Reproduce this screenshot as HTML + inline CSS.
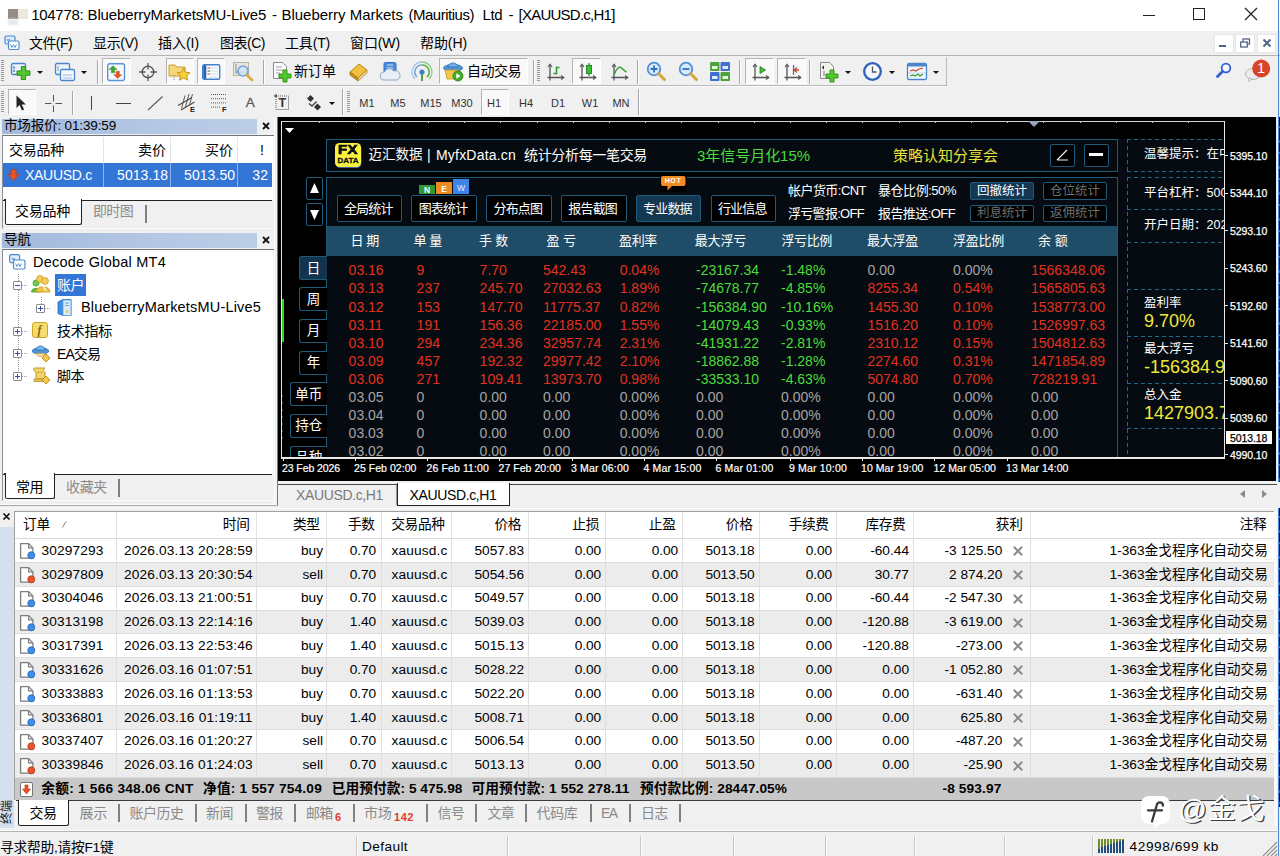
<!DOCTYPE html><html lang="zh"><head><meta charset="utf-8"><title>MT4</title><style>
*{box-sizing:border-box;margin:0;padding:0}
html,body{width:1280px;height:856px;overflow:hidden;background:#f0f0f0}
body{position:relative;font-family:"Liberation Sans","Noto Sans CJK SC",sans-serif;font-size:14px;color:#000;line-height:1}
.a{position:absolute}
.t{position:absolute;white-space:nowrap;line-height:1}
svg{position:absolute;overflow:visible}
.dk{color:#6d6d6d}
</style></head><body>
<div class="a" style="left:0px;top:0px;width:1280px;height:31px;background:#fff"></div>
<div class="a" style="left:8px;top:9px;width:10px;height:10px;background:#968c8a;filter:blur(0.500px)"></div>
<div class="a" style="left:18px;top:9px;width:9.5px;height:10px;background:#ece8de;filter:blur(0.500px)"></div>
<div class="a" style="left:8px;top:19px;width:10px;height:6px;background:#e8e8f2;filter:blur(0.800px)"></div>
<div class="t" style="left:31.3px;top:7.03px;font-size:15px;letter-spacing:-0.319px;">104778:</div>
<div class="t" style="left:87.5px;top:7.03px;font-size:15px;letter-spacing:-0.122px;">BlueberryMarketsMU-Live5</div>
<div class="t" style="left:272px;top:7.03px;font-size:15px;">-</div>
<div class="t" style="left:281.4px;top:7.03px;font-size:15px;letter-spacing:-0.007px;">Blueberry Markets</div>
<div class="t" style="left:408.5px;top:7.03px;font-size:15px;letter-spacing:-0.486px;">(Mauritius)</div>
<div class="t" style="left:482.5px;top:7.03px;font-size:15px;letter-spacing:-0.386px;">Ltd</div>
<div class="t" style="left:508.5px;top:7.03px;font-size:15px;">-</div>
<div class="t" style="left:518.5px;top:7.03px;font-size:15px;letter-spacing:-0.751px;">[XAUUSD.c,H1]</div>
<div class="a" style="left:1143px;top:15px;width:12px;height:1px;background:#222"></div>
<div class="a" style="left:1193px;top:8px;width:12px;height:12px;border:1px solid #222"></div>
<svg style="left:1245px;top:8px" width="12" height="12" viewBox="0 0 12 12"><path d="M0 0L12 12M12 0L0 12" stroke="#222" stroke-width="1.2" fill="none"/></svg>
<div class="a" style="left:0px;top:31px;width:1280px;height:24px;background:#f0f0f0"></div>
<svg style="left:4px;top:35px" width="16" height="16" viewBox="0 0 16 16"><rect x="1" y="1" width="10" height="8" rx="1.5" fill="#dfeaf8" stroke="#4c8ad0" stroke-width="1.2"/><rect x="4.5" y="6" width="10.5" height="8.5" rx="1.5" fill="#fff" stroke="#4c8ad0" stroke-width="1.2"/><path d="M6.5 9.5l1.5 3 1.5-3 1.5 3 1.5-3" stroke="#4c8ad0" stroke-width="0.9" fill="none"/><path d="M3 4l1 2 1-2 1 2" stroke="#4c8ad0" stroke-width="0.8" fill="none"/></svg>
<div class="t" style="left:29px;top:36.21px;font-size:14px;letter-spacing:-0.578px;">文件(F)</div>
<div class="t" style="left:93px;top:36.21px;font-size:14px;letter-spacing:-0.334px;">显示(V)</div>
<div class="t" style="left:158px;top:36.21px;font-size:14px;letter-spacing:-0.044px;">插入(I)</div>
<div class="t" style="left:220px;top:36.21px;font-size:14px;letter-spacing:-0.487px;">图表(C)</div>
<div class="t" style="left:285px;top:36.21px;font-size:14px;letter-spacing:-0.178px;">工具(T)</div>
<div class="t" style="left:350px;top:36.21px;font-size:14px;letter-spacing:-0.109px;">窗口(W)</div>
<div class="t" style="left:420px;top:36.21px;font-size:14px;letter-spacing:-0.087px;">帮助(H)</div>
<div class="a" style="left:1214px;top:33.5px;width:19.5px;height:19px;background:#fff;border:1px solid #e6e6e6"></div>
<div class="a" style="left:1235px;top:33.5px;width:19.5px;height:19px;background:#fff;border:1px solid #e6e6e6"></div>
<div class="a" style="left:1256.5px;top:33.5px;width:19.5px;height:19px;background:#fff;border:1px solid #e6e6e6"></div>
<div class="a" style="left:1219px;top:45px;width:7px;height:2px;background:#4f6488"></div>
<svg style="left:1240px;top:38px" width="10" height="10" viewBox="0 0 10 10"><rect x="3" y="1" width="6.500" height="5" fill="none" stroke="#4f6488" stroke-width="1.300"/><rect x="0.700" y="4" width="6.500" height="5" fill="#fff" stroke="#4f6488" stroke-width="1.300"/></svg>
<svg style="left:1262.5px;top:39px" width="8" height="8" viewBox="0 0 8 8"><path d="M0.500 0.500L7.500 7.500M7.500 0.500L0.500 7.500" stroke="#4f6488" stroke-width="1.900" fill="none"/></svg>
<div class="a" style="left:0px;top:55px;width:1280px;height:1px;background:#b4b4b4"></div>
<div class="a" style="left:0px;top:56px;width:1280px;height:60px;background:#f0f0f0"></div>
<div class="a" style="left:0px;top:85px;width:946px;height:1px;background:#b9b9b9"></div>
<div class="a" style="left:946px;top:57px;width:1px;height:29px;background:#b9b9b9"></div>
<div class="a" style="left:0px;top:86px;width:946px;height:1px;background:#fdfdfd"></div>
<div class="a" style="left:1px;top:60px;width:3px;height:22px;background:repeating-linear-gradient(to bottom,#9a9a9a 0,#9a9a9a 1px,#f0f0f0 1px,#f0f0f0 2px)"></div>
<svg style="left:10.5px;top:63px" width="22" height="20" viewBox="0 0 22 20"><rect x="0.5" y="0.5" width="14" height="11" rx="1.5" fill="#eaf2fb" stroke="#4a86cc" stroke-width="1.3"/><path d="M3 3.500v5.500M2 5l1-1.500 1 1.500M2 7.500l1 1.500 1-1.500" stroke="#4a86cc" stroke-width="0.8" fill="none"/><g transform="translate(6,3.6) scale(1.08)"><path d="M0 4h4v-4h4v4h4v4h-4v4h-4v-4h-4z" fill="#52c82e" stroke="#2b8a15" stroke-width="0.9"/></g></svg>
<svg style="left:37px;top:70.5px" width="6" height="3" viewBox="0 0 6 3"><path d="M0 0h6L3 3z" fill="#111"/></svg>
<svg style="left:55px;top:63px" width="22" height="20" viewBox="0 0 22 20"><rect x="0.5" y="0.5" width="14" height="11" rx="1.5" fill="#eaf2fb" stroke="#4a86cc" stroke-width="1.3"/><rect x="5.5" y="6.5" width="14" height="11" rx="1.5" fill="#f4f8fd" stroke="#4a86cc" stroke-width="1.3"/><path d="M8 12h9M8 15h9" stroke="#8db3df" stroke-width="0.9"/><path d="M3 3v5" stroke="#4a86cc" stroke-width="0.8"/></svg>
<svg style="left:81px;top:70.5px" width="6" height="3" viewBox="0 0 6 3"><path d="M0 0h6L3 3z" fill="#111"/></svg>
<div class="a" style="left:97px;top:60px;width:1px;height:24px;background:#a5a5a5"></div>
<div class="a" style="left:98px;top:60px;width:1px;height:24px;background:#fff"></div>
<div class="a" style="left:102px;top:58px;width:28.5px;height:26px;background:#f9f9f9;border:1px solid #fff;border-top-color:#b4b4b4;border-left-color:#b4b4b4"></div>
<svg style="left:106.8px;top:62.8px" width="19" height="19" viewBox="0 0 19 19"><rect x="0.700" y="0.700" width="16.800" height="16.800" rx="2" fill="#f7fafd" stroke="#5b93d6" stroke-width="1.400"/><path d="M6 2.700l4.100 3.800h-2.400v3.300h-3.400v-3.300h-2.400z" fill="#3aa832" stroke="#2a8a24" stroke-width="0.400"/><path d="M10.700 15.500l-4.100-3.800h2.400v-3.500h3.400v3.500h2.400z" fill="#e25a30" stroke="#b8421c" stroke-width="0.400"/></svg>
<svg style="left:139px;top:63px" width="18" height="18" viewBox="0 0 18 18"><circle cx="9" cy="9" r="5.800" fill="none" stroke="#5a5a5a" stroke-width="1.400"/><path d="M9 0v6.500M9 11.500v6.500M0 9h6.500M11.500 9h6.500" stroke="#5a5a5a" stroke-width="1.300"/></svg>
<div class="a" style="left:166px;top:58px;width:28px;height:26px;background:#f9f9f9;border:1px solid #fff;border-top-color:#b4b4b4;border-left-color:#b4b4b4"></div>
<svg style="left:168px;top:62px" width="24" height="20" viewBox="0 0 24 20"><path d="M1 3h6l2 2h8v9h-16z" fill="#f3d67a" stroke="#c9a032" stroke-width="1"/><path d="M15.5 6l2 4.2 4.5.5-3.3 3 .9 4.5-4.1-2.3-4.1 2.300.9-4.500-3.300-3 4.500-.5z" fill="#f6cf3a" stroke="#c79a1a" stroke-width="1"/><path d="M6 13v6" stroke="#777" stroke-width="0.9" stroke-dasharray="1 1"/></svg>
<div class="a" style="left:197px;top:58px;width:28px;height:26px;background:#f9f9f9;border:1px solid #fff;border-top-color:#b4b4b4;border-left-color:#b4b4b4"></div>
<svg style="left:201.5px;top:63.5px" width="19" height="16" viewBox="0 0 19 16"><rect x="0.700" y="0.700" width="17" height="14.600" rx="1.500" fill="#fdfeff" stroke="#3f7fcb" stroke-width="1.400"/><rect x="1.300" y="1.300" width="3" height="13.400" fill="#2f5fa8"/><path d="M7 4h9M7 7h9M7 10h9M7 13h9" stroke="#c4d6ee" stroke-width="0.900"/><path d="M5.500 4h2.500M5.500 10h2.500" stroke="#e0522a" stroke-width="1.100"/><path d="M5.500 7h2.500" stroke="#3a8a3a" stroke-width="1.100"/></svg>
<svg style="left:233px;top:62px" width="22" height="20" viewBox="0 0 22 20"><rect x="0.5" y="0.5" width="15" height="13" fill="#e9e6dc" stroke="#b9b39d" stroke-width="1"/><path d="M3 2v10M3 10h10" stroke="#777" stroke-width="0.8"/><circle cx="10" cy="9" r="5" fill="#cfe4f8" fill-opacity="0.85" stroke="#6fa3db" stroke-width="1.6"/><path d="M14 13l5 5" stroke="#d9a93a" stroke-width="2.6" stroke-linecap="round"/></svg>
<div class="a" style="left:263px;top:60px;width:1px;height:24px;background:#a5a5a5"></div>
<div class="a" style="left:264px;top:60px;width:1px;height:24px;background:#fff"></div>
<svg style="left:273px;top:62px" width="20" height="20" viewBox="0 0 20 20"><path d="M0.500 0.500h9l4 4v12h-13z" fill="#fafafa" stroke="#8b8b8b" stroke-width="1"/><path d="M3 5h6M3 8h7M3 11h4" stroke="#9a9a9a" stroke-width="0.9"/><g transform="translate(6,8) scale(1.0)"><path d="M0 4h4v-4h4v4h4v4h-4v4h-4v-4h-4z" fill="#52c82e" stroke="#2b8a15" stroke-width="0.9"/></g></svg>
<div class="t" style="left:294px;top:64.21px;font-size:14px;letter-spacing:0.000px;">新订单</div>
<svg style="left:349px;top:62px" width="20" height="18" viewBox="0 0 20 18"><path d="M1 10l9-8 8 6-9 8z" fill="#f0c040" stroke="#b98416" stroke-width="1"/><path d="M1 10l0 3 8 6 0-3z" fill="#c98f1c" stroke="#a87412" stroke-width="0.8"/><path d="M9 16l9-8v3l-9 8z" fill="#e8d9a8" stroke="#b98416" stroke-width="0.8"/></svg>
<svg style="left:380px;top:62px" width="22" height="20" viewBox="0 0 22 20"><rect x="4" y="0.500" width="12" height="12" rx="1.5" fill="#4a8fdc" stroke="#2f6fbd" stroke-width="1"/><path d="M7 3h6M7 6h6" stroke="#cfe2f7" stroke-width="1.2"/><path d="M4 18a4 4 0 0 1 .5-8 5 5 0 0 1 9-1 4.500 4.500 0 0 1 3.500 9z" fill="#e8eef6" stroke="#8ea6c4" stroke-width="1"/></svg>
<svg style="left:412px;top:62px" width="20" height="20" viewBox="0 0 20 20"><path d="M10 3a7 7 0 0 0 -5 12" fill="none" stroke="#7aa6dc" stroke-width="1.6"/><path d="M10 3a7 7 0 0 1 5 12" fill="none" stroke="#5bb04a" stroke-width="1.6"/><path d="M10 0a10 10 0 0 0 -7 17" fill="none" stroke="#a9c6e8" stroke-width="1.3"/><path d="M10 0a10 10 0 0 1 7 17" fill="none" stroke="#8fce80" stroke-width="1.3"/><circle cx="10" cy="10" r="2.6" fill="#3f7fcb"/><path d="M10 12v7" stroke="#4aa63a" stroke-width="2"/></svg>
<div class="a" style="left:439px;top:58px;width:89px;height:26px;background:#f9f9f9;border:1px solid #fff;border-top-color:#b4b4b4;border-left-color:#b4b4b4"></div>
<svg style="left:443px;top:62px" width="22" height="20" viewBox="0 0 22 20"><ellipse cx="10" cy="6" rx="9.500" ry="3.600" fill="#4f95d8" stroke="#2f6fb5" stroke-width="0.8"/><path d="M5 5a5 4 0 0 1 10 0z" fill="#6fb0ea" stroke="#2f6fb5" stroke-width="0.8"/><path d="M2 8l2 9h9l3-9z" fill="#f2c84a" stroke="#c3951e" stroke-width="0.8"/><circle cx="15" cy="14" r="5" fill="#3fae2a" stroke="#237a14" stroke-width="0.8"/><path d="M13.300 11.200l4.200 2.800-4.200 2.800z" fill="#fff"/></svg>
<div class="t" style="left:467px;top:64.21px;font-size:14px;letter-spacing:-0.500px;">自动交易</div>
<div class="a" style="left:533px;top:60px;width:1px;height:24px;background:#a5a5a5"></div>
<div class="a" style="left:534px;top:60px;width:1px;height:24px;background:#fff"></div>
<div class="a" style="left:537px;top:60px;width:3px;height:22px;background:repeating-linear-gradient(to bottom,#9a9a9a 0,#9a9a9a 1px,#f0f0f0 1px,#f0f0f0 2px)"></div>
<svg style="left:546.5px;top:62.5px" width="19" height="20" viewBox="0 0 19 20"><path d="M3 1.500v16M0.500 14.500h16" stroke="#555" stroke-width="1.300" fill="none"/><path d="M1 4l2-2.800 2 2.800M14 12.500l2.800 2-2.800 2" stroke="#555" stroke-width="1.100" fill="none"/><path d="M9.500 3.500v8M9.500 4.500h3M6.500 10.500h3" stroke="#2f9e2a" stroke-width="1.600" fill="none"/></svg>
<div class="a" style="left:572px;top:58px;width:29px;height:26px;background:#f9f9f9;border:1px solid #fff;border-top-color:#b4b4b4;border-left-color:#b4b4b4"></div>
<svg style="left:578.5px;top:62.5px" width="19" height="20" viewBox="0 0 19 20"><path d="M3 1.500v16M0.500 14.500h16" stroke="#555" stroke-width="1.300" fill="none"/><path d="M1 4l2-2.800 2 2.800M14 12.500l2.800 2-2.800 2" stroke="#555" stroke-width="1.100" fill="none"/><path d="M10 0v13" stroke="#1f7f1c" stroke-width="1.2"/><rect x="7.500" y="2.500" width="5" height="8" fill="#3fbf35" stroke="#1f7f1c" stroke-width="0.9"/></svg>
<svg style="left:610.5px;top:62.5px" width="19" height="20" viewBox="0 0 19 20"><path d="M3 1.500v16M0.500 14.500h16" stroke="#555" stroke-width="1.300" fill="none"/><path d="M1 4l2-2.800 2 2.800M14 12.500l2.800 2-2.800 2" stroke="#555" stroke-width="1.100" fill="none"/><path d="M3.500 11c2-6 5-8 7-6s3 3 5 4" stroke="#2f9e2a" stroke-width="1.400" fill="none"/></svg>
<div class="a" style="left:637px;top:60px;width:1px;height:24px;background:#a5a5a5"></div>
<div class="a" style="left:638px;top:60px;width:1px;height:24px;background:#fff"></div>
<svg style="left:646px;top:61px" width="22" height="22" viewBox="0 0 22 22"><circle cx="8" cy="8" r="6.300" fill="#d9ebfb" stroke="#4f8fd6" stroke-width="1.800"/><path d="M12.500 12.500l6 6" stroke="#d4a838" stroke-width="3" stroke-linecap="round"/><path d="M4.500 8h7M8 4.500v7" stroke="#2f6fbd" stroke-width="1.800"/></svg>
<svg style="left:678px;top:61px" width="22" height="22" viewBox="0 0 22 22"><circle cx="8" cy="8" r="6.300" fill="#d9ebfb" stroke="#4f8fd6" stroke-width="1.800"/><path d="M12.500 12.500l6 6" stroke="#d4a838" stroke-width="3" stroke-linecap="round"/><path d="M4.500 8h7" stroke="#2f6fbd" stroke-width="1.800"/></svg>
<svg style="left:710px;top:62px" width="20" height="19" viewBox="0 0 20 19"><rect x="0" y="0" width="9.500" height="9" rx="1" fill="#4fa23a"/><rect x="10.500" y="0" width="9.500" height="9" rx="1" fill="#3f6fd0"/><rect x="0" y="10" width="9.500" height="9" rx="1" fill="#3f6fd0"/><rect x="10.500" y="10" width="9.500" height="9" rx="1" fill="#4fa23a"/><path d="M2 4h5.500v3h-5.500zM12.500 4h5.500v3h-5.500zM2 14h5.500v3h-5.500zM12.500 14h5.500v3h-5.500z" fill="#fff" fill-opacity="0.850"/></svg>
<div class="a" style="left:739px;top:60px;width:1px;height:24px;background:#a5a5a5"></div>
<div class="a" style="left:740px;top:60px;width:1px;height:24px;background:#fff"></div>
<div class="a" style="left:745px;top:58px;width:29px;height:26px;background:#f9f9f9;border:1px solid #fff;border-top-color:#b4b4b4;border-left-color:#b4b4b4"></div>
<svg style="left:751.5px;top:62.5px" width="19" height="20" viewBox="0 0 19 20"><path d="M3 1.500v16M0.500 14.500h16" stroke="#555" stroke-width="1.300" fill="none"/><path d="M1 4l2-2.800 2 2.800M14 12.500l2.800 2-2.800 2" stroke="#555" stroke-width="1.100" fill="none"/><path d="M8 3.500l5.500 3.500-5.500 3.500z" fill="#3fbf35" stroke="#1f7f1c" stroke-width="0.800"/></svg>
<div class="a" style="left:777px;top:58px;width:29px;height:26px;background:#f9f9f9;border:1px solid #fff;border-top-color:#b4b4b4;border-left-color:#b4b4b4"></div>
<svg style="left:783.5px;top:62.5px" width="19" height="20" viewBox="0 0 19 20"><path d="M3 1.500v16M0.500 14.500h16" stroke="#555" stroke-width="1.300" fill="none"/><path d="M1 4l2-2.800 2 2.800M14 12.500l2.800 2-2.800 2" stroke="#555" stroke-width="1.100" fill="none"/><path d="M9.500 2v10" stroke="#3f6fd0" stroke-width="1.300"/><path d="M15 7h-4M13 4.500l-3 2.500 3 2.500" stroke="#d0452a" stroke-width="1.300" fill="none"/></svg>
<div class="a" style="left:809px;top:60px;width:1px;height:24px;background:#a5a5a5"></div>
<div class="a" style="left:810px;top:60px;width:1px;height:24px;background:#fff"></div>
<svg style="left:820px;top:62px" width="20" height="20" viewBox="0 0 20 20"><path d="M0.500 0.500h9l4 4v12h-13z" fill="#f3f3ee" stroke="#8b8b8b" stroke-width="1"/><path d="M4 4c-2 0-2 3 0 3M4 9v5" stroke="#777" stroke-width="1"/><g transform="translate(6,8) scale(1.0)"><path d="M0 4h4v-4h4v4h4v4h-4v4h-4v-4h-4z" fill="#52c82e" stroke="#2b8a15" stroke-width="0.9"/></g></svg>
<svg style="left:845px;top:70.5px" width="6" height="3" viewBox="0 0 6 3"><path d="M0 0h6L3 3z" fill="#111"/></svg>
<svg style="left:863px;top:62px" width="19" height="19" viewBox="0 0 19 19"><circle cx="9.500" cy="9.500" r="8.300" fill="#f4f8fd" stroke="#2f63b8" stroke-width="2.300"/><path d="M9.500 4.500v5.500h4" stroke="#555" stroke-width="1.300" fill="none"/></svg>
<svg style="left:889px;top:70.5px" width="6" height="3" viewBox="0 0 6 3"><path d="M0 0h6L3 3z" fill="#111"/></svg>
<svg style="left:907px;top:63px" width="20" height="17" viewBox="0 0 20 17"><rect x="0.500" y="0.500" width="19" height="16" rx="1.500" fill="#f4f8fd" stroke="#4a86cc" stroke-width="1.300"/><rect x="1" y="1" width="18" height="2.500" fill="#4a86cc"/><path d="M3 8l3-1 3 1 3-2 4-1" stroke="#d0452a" stroke-width="1.200" fill="none"/><path d="M3 13l3-1 2 1 3-2 2 2 3-2" stroke="#2f9e2a" stroke-width="1.200" fill="none"/><path d="M1 10h18" stroke="#b6cdea" stroke-width="0.800"/></svg>
<svg style="left:933px;top:70.5px" width="6" height="3" viewBox="0 0 6 3"><path d="M0 0h6L3 3z" fill="#111"/></svg>
<svg style="left:1215px;top:62px" width="16" height="17" viewBox="0 0 16 17"><circle cx="11" cy="6" r="4.300" fill="#f4f8fe" stroke="#2f5fd0" stroke-width="1.800"/><path d="M7.500 9.500l-5 5" stroke="#2f5fd0" stroke-width="2.800" stroke-linecap="round"/></svg>
<svg style="left:1244px;top:59px" width="28" height="24" viewBox="0 0 28 24"><ellipse cx="9" cy="15" rx="7.500" ry="5.500" fill="#ececec" stroke="#b5b5b5" stroke-width="1"/><path d="M5 19l-1 3.500 4.500-2.500z" fill="#ececec" stroke="#b5b5b5" stroke-width="0.800"/><circle cx="17.200" cy="9.500" r="9" fill="#d8432a"/></svg>
<div class="t" style="left:1161px;width:200px;text-align:center;top:61.47px;font-size:14.5px;color:#fff">1</div>
<div class="a" style="left:1px;top:91px;width:3px;height:22px;background:repeating-linear-gradient(to bottom,#9a9a9a 0,#9a9a9a 1px,#f0f0f0 1px,#f0f0f0 2px)"></div>
<div class="a" style="left:8px;top:89px;width:28px;height:26px;background:#f9f9f9;border:1px solid #fff;border-top-color:#b4b4b4;border-left-color:#b4b4b4"></div>
<svg style="left:16px;top:95px" width="12" height="18" viewBox="0 0 12 18"><path d="M0.500 0.500v12.500l3.100-2.900 2.400 5.400 2.100-.9-2.400-5.200h4.200z" fill="#222"/></svg>
<svg style="left:45px;top:95px" width="17" height="17" viewBox="0 0 17 17"><path d="M8.500 0v6.500M8.500 10.500v6.500M0 8.500h6.500M10.500 8.500h6.500" stroke="#555" stroke-width="1"/></svg>
<div class="a" style="left:72px;top:91px;width:1px;height:24px;background:#a5a5a5"></div>
<div class="a" style="left:73px;top:91px;width:1px;height:24px;background:#fff"></div>
<div class="a" style="left:91px;top:96px;width:1px;height:14px;background:#444"></div>
<div class="a" style="left:116px;top:103px;width:15px;height:1px;background:#444"></div>
<svg style="left:148px;top:95.5px" width="16" height="15" viewBox="0 0 16 15"><path d="M0 14l14.500-13.500" stroke="#5a5a5a" stroke-width="1.100"/></svg>
<svg style="left:178px;top:93.5px" width="18" height="18" viewBox="0 0 18 18"><path d="M0 11.500l14-8M3 16l13.500-8" stroke="#4a4a4a" stroke-width="1.200"/><path d="M3.500 14.500l3.500-13M7.500 13l3.500-13M11.500 11l3-11" stroke="#4a4a4a" stroke-width="0.900"/></svg>
<div class="t" style="left:190px;top:105.66px;font-size:7.5px;font-weight:bold;color:#222">E</div>
<svg style="left:210.5px;top:94px" width="17" height="14" viewBox="0 0 17 14"><path d="M0 0.500h15.500M0 4.700h15.500M0 8.900h15.500M0 13.100h9" stroke="#555" stroke-width="1" stroke-dasharray="1 1"/></svg>
<div class="t" style="left:222px;top:106.36px;font-size:7.5px;font-weight:bold;color:#222">F</div>
<div class="t" style="left:150.3px;width:200px;text-align:center;top:96.25px;font-size:13.5px;color:#5a5a5a;-webkit-text-stroke:0.300px #5a5a5a">A</div>
<svg style="left:274px;top:93.5px" width="17" height="18" viewBox="0 0 17 18"><rect x="2" y="2" width="12.500" height="13.500" fill="none" stroke="#555" stroke-width="1" stroke-dasharray="1 1"/><path d="M0.500 0.500h2.500v2.500h-2.500z" fill="#555"/></svg>
<div class="t" style="left:182.3px;width:200px;text-align:center;top:97.44px;font-size:12.5px;font-weight:bold;color:#333">T</div>
<svg style="left:306px;top:95px" width="16" height="16" viewBox="0 0 16 16"><path d="M4.500 0l3.500 3.500-3.500 3.500-3.500-3.500z" fill="#333"/><path d="M11.500 8.500l3.500 3.500-3.500 3.500-3.500-3.500z" fill="#333"/><path d="M3 8.500l3 2.500 4.500-4.500" stroke="#444" stroke-width="1.400" fill="none"/></svg>
<svg style="left:329px;top:101.5px" width="6" height="3" viewBox="0 0 6 3"><path d="M0 0h6L3 3z" fill="#111"/></svg>
<div class="a" style="left:342px;top:89px;width:1px;height:26px;background:#a5a5a5"></div>
<div class="a" style="left:343px;top:89px;width:1px;height:26px;background:#fff"></div>
<div class="a" style="left:347px;top:91px;width:3px;height:22px;background:repeating-linear-gradient(to bottom,#9a9a9a 0,#9a9a9a 1px,#f0f0f0 1px,#f0f0f0 2px)"></div>
<div class="a" style="left:481px;top:89px;width:28px;height:26px;background:#f9f9f9;border:1px solid #fff;border-top-color:#b4b4b4;border-left-color:#b4b4b4"></div>
<div class="t" style="left:267px;width:200px;text-align:center;top:97.67px;font-size:11px;color:#333">M1</div>
<div class="t" style="left:298px;width:200px;text-align:center;top:97.67px;font-size:11px;color:#333">M5</div>
<div class="t" style="left:331px;width:200px;text-align:center;top:97.67px;font-size:11px;color:#333">M15</div>
<div class="t" style="left:362px;width:200px;text-align:center;top:97.67px;font-size:11px;color:#333">M30</div>
<div class="t" style="left:394px;width:200px;text-align:center;top:97.67px;font-size:11px;color:#333">H1</div>
<div class="t" style="left:426px;width:200px;text-align:center;top:97.67px;font-size:11px;color:#333">H4</div>
<div class="t" style="left:458px;width:200px;text-align:center;top:97.67px;font-size:11px;color:#333">D1</div>
<div class="t" style="left:490px;width:200px;text-align:center;top:97.67px;font-size:11px;color:#333">W1</div>
<div class="t" style="left:521px;width:200px;text-align:center;top:97.67px;font-size:11px;color:#333">MN</div>
<div class="a" style="left:638px;top:89px;width:1px;height:26px;background:#a5a5a5"></div>
<div class="a" style="left:639px;top:89px;width:1px;height:26px;background:#fff"></div>
<div class="a" style="left:0px;top:116px;width:279px;height:392px;background:#f0f0f0"></div>
<div class="a" style="left:2px;top:119px;width:255px;height:15px;background:linear-gradient(to right,#a3b9dc 0,#b4c7e4 60%,#bccde7 100%)"></div>
<div class="t" style="left:4px;top:119.45px;font-size:13.5px;letter-spacing:-0.147px;">市场报价: 01:39:59</div>
<svg style="left:262px;top:122px" width="8" height="8" viewBox="0 0 8 8"><path d="M1 1l6 6M7 1l-6 6" stroke="#111" stroke-width="1.800"/></svg>
<div class="a" style="left:2px;top:135px;width:273px;height:94px;background:#f0f0f0;border:1px solid #8a8f98;border-top-color:#6f747c;border-right-color:#fbfbfb;border-bottom-color:#fbfbfb"></div>
<div class="a" style="left:3px;top:136px;width:270px;height:64px;background:#fff"></div>
<div class="a" style="left:103px;top:137px;width:1px;height:26px;background:#e4e4e4"></div>
<div class="a" style="left:170px;top:137px;width:1px;height:26px;background:#e4e4e4"></div>
<div class="a" style="left:237px;top:137px;width:1px;height:26px;background:#e4e4e4"></div>
<div class="t" style="left:9px;top:142.71px;font-size:14px;letter-spacing:-0.250px;">交易品种</div>
<div class="t" style="right:1114.0px;top:142.71px;text-align:right;font-size:14px;letter-spacing:0.000px;">卖价</div>
<div class="t" style="right:1047.0px;top:142.71px;text-align:right;font-size:14px;letter-spacing:0.000px;">买价</div>
<div class="t" style="left:260px;top:142.71px;font-size:14px;">!</div>
<div class="a" style="left:3px;top:163px;width:269px;height:24px;background:#3376d6"></div>
<div class="a" style="left:103px;top:163px;width:1px;height:24px;background:#8fb3ea"></div>
<div class="a" style="left:170px;top:163px;width:1px;height:24px;background:#8fb3ea"></div>
<div class="a" style="left:237px;top:163px;width:1px;height:24px;background:#8fb3ea"></div>
<svg style="left:8px;top:169px" width="11" height="12" viewBox="0 0 11 12"><path d="M3 0.500h5v5h3l-5.500 6-5.500-6h3z" fill="#e8542a" stroke="#b53a15" stroke-width="0.800"/></svg>
<div class="t" style="left:25px;top:168.21px;font-size:14px;letter-spacing:-0.279px;color:#fff">XAUUSD.c</div>
<div class="t" style="right:1111.94px;top:168.21px;text-align:right;font-size:14px;letter-spacing:0.056px;color:#fff">5013.18</div>
<div class="t" style="right:1044.94px;top:168.21px;text-align:right;font-size:14px;letter-spacing:0.056px;color:#fff">5013.50</div>
<div class="t" style="right:1011.79px;top:168.21px;text-align:right;font-size:14px;letter-spacing:0.211px;color:#fff">32</div>
<div class="a" style="left:3px;top:199.5px;width:269px;height:1.5px;background:#222"></div>
<div class="a" style="left:4.5px;top:199px;width:77.5px;height:26px;background:#fff;border:1.500px solid #222;border-top:none;border-radius:0 0 2.500px 2.500px"></div>
<div class="a" style="left:6px;top:198px;width:74.5px;height:3px;background:#fff"></div>
<div class="a" style="left:3.5px;top:198.5px;width:1.5px;height:2px;background:#222"></div>
<div class="t" style="left:15px;top:204.21px;font-size:14px;letter-spacing:-0.250px;">交易品种</div>
<div class="t" style="left:93px;top:204.21px;font-size:14px;letter-spacing:-0.667px;color:#8b8b8b">即时图</div>
<div class="a" style="left:145px;top:205px;width:1.5px;height:17.5px;background:#808080"></div>
<div class="a" style="left:2px;top:233px;width:255px;height:15px;background:linear-gradient(to right,#a3b9dc 0,#b4c7e4 60%,#bccde7 100%)"></div>
<div class="t" style="left:4px;top:233.45px;font-size:13.5px;letter-spacing:0.000px;">导航</div>
<svg style="left:262px;top:236px" width="8" height="8" viewBox="0 0 8 8"><path d="M1 1l6 6M7 1l-6 6" stroke="#111" stroke-width="1.800"/></svg>
<div class="a" style="left:2px;top:249px;width:273px;height:252px;background:#f0f0f0;border:1px solid #8a8f98;border-top-color:#6f747c;border-right-color:#fbfbfb;border-bottom-color:#fbfbfb"></div>
<div class="a" style="left:3px;top:250px;width:270px;height:224px;background:#fff"></div>
<div class="a" style="left:18px;top:274px;width:1px;height:104px;background:repeating-linear-gradient(to bottom,#9a9a9a 0,#9a9a9a 1px,transparent 1px,transparent 2px)"></div>
<div class="a" style="left:41px;top:297px;width:1px;height:8px;background:repeating-linear-gradient(to bottom,#9a9a9a 0,#9a9a9a 1px,transparent 1px,transparent 2px)"></div>
<div class="a" style="left:22px;top:285px;width:6px;height:1px;background:repeating-linear-gradient(to right,#9a9a9a 0,#9a9a9a 1px,transparent 1px,transparent 2px)"></div>
<div class="a" style="left:13px;top:281px;width:9px;height:9px;background:#fff;border:1px solid #8c8c8c;border-radius:1px"></div>
<div class="a" style="left:15px;top:285px;width:5px;height:1px;background:#2f4fa0"></div>
<div class="a" style="left:45px;top:308px;width:6px;height:1px;background:repeating-linear-gradient(to right,#9a9a9a 0,#9a9a9a 1px,transparent 1px,transparent 2px)"></div>
<div class="a" style="left:36px;top:304px;width:9px;height:9px;background:#fff;border:1px solid #8c8c8c;border-radius:1px"></div>
<div class="a" style="left:38px;top:308px;width:5px;height:1px;background:#2f4fa0"></div>
<div class="a" style="left:40px;top:306px;width:1px;height:5px;background:#2f4fa0"></div>
<div class="a" style="left:22px;top:331px;width:6px;height:1px;background:repeating-linear-gradient(to right,#9a9a9a 0,#9a9a9a 1px,transparent 1px,transparent 2px)"></div>
<div class="a" style="left:13px;top:327px;width:9px;height:9px;background:#fff;border:1px solid #8c8c8c;border-radius:1px"></div>
<div class="a" style="left:15px;top:331px;width:5px;height:1px;background:#2f4fa0"></div>
<div class="a" style="left:17px;top:329px;width:1px;height:5px;background:#2f4fa0"></div>
<div class="a" style="left:22px;top:353px;width:6px;height:1px;background:repeating-linear-gradient(to right,#9a9a9a 0,#9a9a9a 1px,transparent 1px,transparent 2px)"></div>
<div class="a" style="left:13px;top:349px;width:9px;height:9px;background:#fff;border:1px solid #8c8c8c;border-radius:1px"></div>
<div class="a" style="left:15px;top:353px;width:5px;height:1px;background:#2f4fa0"></div>
<div class="a" style="left:17px;top:351px;width:1px;height:5px;background:#2f4fa0"></div>
<div class="a" style="left:22px;top:376px;width:6px;height:1px;background:repeating-linear-gradient(to right,#9a9a9a 0,#9a9a9a 1px,transparent 1px,transparent 2px)"></div>
<div class="a" style="left:13px;top:372px;width:9px;height:9px;background:#fff;border:1px solid #8c8c8c;border-radius:1px"></div>
<div class="a" style="left:15px;top:376px;width:5px;height:1px;background:#2f4fa0"></div>
<div class="a" style="left:17px;top:374px;width:1px;height:5px;background:#2f4fa0"></div>
<svg style="left:9px;top:254px" width="17" height="16" viewBox="0 0 17 16"><rect x="0.600" y="0.600" width="10" height="8" rx="1.500" fill="#dfeaf8" stroke="#4c8ad0" stroke-width="1.200"/><rect x="4.500" y="6" width="11.500" height="9" rx="1.500" fill="#fff" stroke="#4c8ad0" stroke-width="1.200"/><path d="M6.500 9.500l1.500 3 1.500-3 1.500 3 1.500-3" stroke="#4c8ad0" stroke-width="0.900" fill="none"/><path d="M3 4l1 2 1-2 1 2" stroke="#4c8ad0" stroke-width="0.800" fill="none"/></svg>
<div class="t" style="left:33px;top:254.97px;font-size:14.5px;letter-spacing:0.238px;">Decode Global MT4</div>
<svg style="left:31px;top:275px" width="20" height="18" viewBox="0 0 20 18"><circle cx="5" cy="8" r="3" fill="#6fcf4f" stroke="#3c9a2a" stroke-width="0.800"/><path d="M0.500 17c0-5 9-5 9 0z" fill="#5fc63f" stroke="#3c9a2a" stroke-width="0.800"/><circle cx="9" cy="4" r="3.400" fill="#f2cf5a" stroke="#c79a22" stroke-width="0.800"/><circle cx="14" cy="6" r="3.400" fill="#f2cf5a" stroke="#c79a22" stroke-width="0.800"/><path d="M5 17c0-7 14-7 14 0z" fill="#eec244" stroke="#c79a22" stroke-width="0.800"/><path d="M12 11l3 5" stroke="#fff" stroke-width="1.200"/></svg>
<div class="a" style="left:55px;top:274px;width:31px;height:22px;background:#3376d6"></div>
<div class="t" style="left:57px;top:278.21px;font-size:14px;letter-spacing:-0.500px;color:#fff">账户</div>
<svg style="left:57px;top:299px" width="15" height="18" viewBox="0 0 15 18"><path d="M1 3l5-2.500h8v16h-8l-5-2z" fill="#3f8fe0" stroke="#2a6fc0" stroke-width="0.900"/><rect x="6" y="1" width="8" height="15.500" fill="#d9ecfb" stroke="#5fa0e0" stroke-width="0.800"/><path d="M8 4h4M8 6.500h4" stroke="#5fa0e0" stroke-width="0.900"/><rect x="9" y="11" width="2.200" height="3" fill="#f2c84a"/></svg>
<div class="t" style="left:81px;top:299.97px;font-size:14.5px;letter-spacing:0.180px;">BlueberryMarketsMU-Live5</div>
<svg style="left:32px;top:322px" width="16" height="16" viewBox="0 0 16 16"><rect x="0.500" y="0.500" width="15" height="15" rx="2.500" fill="#f6dc6a" stroke="#c9a62e" stroke-width="1"/></svg>
<div class="t" style="left:37.5px;top:323.68px;font-size:12px;font-family:&quot;Liberation Serif&quot;,serif;font-style:italic;font-weight:bold;color:#8a6a10">f</div>
<div class="t" style="left:57px;top:323.61px;font-size:14px;letter-spacing:-0.250px;">技术指标</div>
<svg style="left:32px;top:345px" width="19" height="17" viewBox="0 0 19 17"><ellipse cx="8.500" cy="6" rx="8.300" ry="3.300" fill="#4f95d8" stroke="#2f6fb5" stroke-width="0.800"/><path d="M4 5a4.500 4 0 0 1 9 0z" fill="#79b7ee" stroke="#2f6fb5" stroke-width="0.800"/><path d="M4 8.500c0 4 9 4 9 0z" fill="#f3d9a0" stroke="#c9a050" stroke-width="0.700"/><path d="M14 9l4 4-4 4-4-4z" fill="#f2c84a" stroke="#b98a1c" stroke-width="0.900"/></svg>
<div class="t" style="left:57px;top:346.61px;font-size:14px;letter-spacing:-0.922px;">EA交易</div>
<svg style="left:32px;top:367px" width="19" height="17" viewBox="0 0 19 17"><path d="M2 1h11c-2 2-2 3 0 4v7h-9v-7c-2-1-3-2-2-4z" fill="#f2d46a" stroke="#b9902a" stroke-width="0.900"/><path d="M2 12h11v2.500h-11z" fill="#e9c24f" stroke="#b9902a" stroke-width="0.800"/><path d="M6.500 5v1M9.500 5v1" stroke="#8a6a10" stroke-width="1"/><path d="M14 9l4 4-4 4-4-4z" fill="#f2c84a" stroke="#b98a1c" stroke-width="0.900"/></svg>
<div class="t" style="left:57px;top:368.61px;font-size:14px;letter-spacing:-0.500px;">脚本</div>
<div class="a" style="left:3px;top:473.5px;width:269px;height:1.5px;background:#222"></div>
<div class="a" style="left:4.5px;top:473px;width:50.5px;height:26px;background:#fff;border:1.500px solid #222;border-top:none;border-radius:0 0 2.500px 2.500px"></div>
<div class="a" style="left:6px;top:472px;width:47.5px;height:3px;background:#fff"></div>
<div class="a" style="left:3.5px;top:472.5px;width:1.5px;height:2px;background:#222"></div>
<div class="t" style="left:16px;top:480.21px;font-size:14px;letter-spacing:-0.500px;">常用</div>
<div class="t" style="left:66px;top:480.21px;font-size:14px;letter-spacing:-0.333px;color:#8b8b8b">收藏夹</div>
<div class="a" style="left:118px;top:479px;width:1.5px;height:18px;background:#808080"></div>
<div class="a" style="left:276px;top:116px;width:3px;height:392px;background:#f0f0f0"></div>
<div class="a" style="left:279px;top:116px;width:1001px;height:366px;background:#f0f0f0"></div>
<div class="a" style="left:278px;top:117px;width:998px;height:364px;background:#000"></div>
<div class="a" style="left:1276px;top:117px;width:1px;height:364px;background:#e6eefa"></div>
<div class="a" style="left:1277.5px;top:0px;width:1.5px;height:856px;background:#4a86dc"></div>
<div class="a" style="left:1279px;top:117px;width:1px;height:690px;background:repeating-linear-gradient(to bottom,#0a1020 0,#0a1020 9px,#6a6a30 9px,#6a6a30 11px,#101830 11px,#101830 23px,#2f5f9a 23px,#2f5f9a 26px)"></div>
<div class="a" style="left:281px;top:120.5px;width:944px;height:1px;background:#d4d4d4"></div>
<div class="a" style="left:281px;top:121px;width:1px;height:338px;background:#e8e8e8"></div>
<div class="a" style="left:1223.5px;top:121px;width:1.5px;height:338px;background:#e8e8e8"></div>
<div class="a" style="left:281px;top:457px;width:944px;height:1.5px;background:#e8e8e8"></div>
<div class="a" style="left:319px;top:121px;width:1px;height:2px;background:#c8c8c8"></div>
<div class="a" style="left:356px;top:121px;width:1px;height:2px;background:#c8c8c8"></div>
<div class="a" style="left:392px;top:121px;width:1px;height:2px;background:#c8c8c8"></div>
<div class="a" style="left:428px;top:121px;width:1px;height:2px;background:#c8c8c8"></div>
<div class="a" style="left:464px;top:121px;width:1px;height:2px;background:#c8c8c8"></div>
<div class="a" style="left:500px;top:121px;width:1px;height:2px;background:#c8c8c8"></div>
<div class="a" style="left:537px;top:121px;width:1px;height:2px;background:#c8c8c8"></div>
<div class="a" style="left:573px;top:121px;width:1px;height:2px;background:#c8c8c8"></div>
<div class="a" style="left:609px;top:121px;width:1px;height:2px;background:#c8c8c8"></div>
<div class="a" style="left:645px;top:121px;width:1px;height:2px;background:#c8c8c8"></div>
<div class="a" style="left:681px;top:121px;width:1px;height:2px;background:#c8c8c8"></div>
<div class="a" style="left:718px;top:121px;width:1px;height:2px;background:#c8c8c8"></div>
<div class="a" style="left:754px;top:121px;width:1px;height:2px;background:#c8c8c8"></div>
<div class="a" style="left:790px;top:121px;width:1px;height:2px;background:#c8c8c8"></div>
<div class="a" style="left:826px;top:121px;width:1px;height:2px;background:#c8c8c8"></div>
<div class="a" style="left:862px;top:121px;width:1px;height:2px;background:#c8c8c8"></div>
<div class="a" style="left:899px;top:121px;width:1px;height:2px;background:#c8c8c8"></div>
<div class="a" style="left:935px;top:121px;width:1px;height:2px;background:#c8c8c8"></div>
<div class="a" style="left:971px;top:121px;width:1px;height:2px;background:#c8c8c8"></div>
<div class="a" style="left:1007px;top:121px;width:1px;height:2px;background:#c8c8c8"></div>
<div class="a" style="left:1043px;top:121px;width:1px;height:2px;background:#c8c8c8"></div>
<div class="a" style="left:1080px;top:121px;width:1px;height:2px;background:#c8c8c8"></div>
<div class="a" style="left:1116px;top:121px;width:1px;height:2px;background:#c8c8c8"></div>
<div class="a" style="left:1152px;top:121px;width:1px;height:2px;background:#c8c8c8"></div>
<div class="a" style="left:1188px;top:121px;width:1px;height:2px;background:#c8c8c8"></div>
<svg style="left:285px;top:128px" width="9" height="5" viewBox="0 0 9 5"><path d="M0 0h9l-4.500 5z" fill="#fff"/></svg>
<svg style="left:1027.5px;top:121px" width="12" height="6" viewBox="0 0 12 6"><path d="M0 0h12l-6 6z" fill="#98a4bc"/></svg>
<div class="a" style="left:282px;top:299px;width:2px;height:43px;background:#35d02a"></div>
<div class="a" style="left:282px;top:395px;width:1px;height:44px;background:repeating-linear-gradient(to bottom,#185214 0,#185214 2px,#000 2px,#000 7px)"></div>
<div class="a" style="left:282px;top:122px;width:941.500px;height:335px;overflow:hidden">
<div class="a" style="left:44px;top:17px;width:792px;height:33px;background:#050b10;border:1px solid #1f5a7a"></div>
<div class="a" style="left:53px;top:21px;width:26px;height:24px;background:#fbf23e;border-radius:4.500px;box-shadow:0.500px 1px 0 #3b5fae"></div>
<div class="t" style="left:-33.69999999999999px;width:200px;text-align:center;top:22.48px;font-size:12px;font-weight:bold;color:#111;letter-spacing:0.300px;transform:scaleX(1.250);-webkit-text-stroke:0.700px #111">FX</div>
<div class="t" style="left:-34px;width:200px;text-align:center;top:35.42px;font-size:8px;font-weight:bold;color:#111;-webkit-text-stroke:0.300px #111">DATA</div>
<div class="t" style="left:86.5px;top:26.45px;font-size:13.5px;letter-spacing:0.000px;color:#fff">迈汇数据</div>
<div class="t" style="left:145px;top:25.71px;font-size:14px;color:#fff">|</div>
<div class="t" style="left:154px;top:26.21px;font-size:14px;letter-spacing:0.199px;color:#fff">MyfxData.cn</div>
<div class="t" style="left:242px;top:26.21px;font-size:14px;letter-spacing:-0.333px;color:#fff">统计分析每一笔交易</div>
<div class="t" style="left:415px;top:26.22px;font-size:15px;letter-spacing:-0.042px;color:#4bdc3c">3年信号月化15%</div>
<div class="t" style="left:611px;top:26.22px;font-size:15px;letter-spacing:-0.002px;color:#e6e23a">策略认知分享会</div>
<div class="a" style="left:768px;top:22px;width:25px;height:23px;background:#000;border:1px solid #1f5a7a;border-radius:2px"></div>
<svg style="left:774px;top:27px" width="13" height="12" viewBox="0 0 13 12"><path d="M1 11h11M1 11l10-10" stroke="#eee" stroke-width="1.200" fill="none"/></svg>
<div class="a" style="left:802px;top:22px;width:25px;height:23px;background:#000;border:1px solid #1f5a7a;border-radius:2px"></div>
<div class="a" style="left:807px;top:31px;width:14px;height:3px;background:#fff"></div>
<div class="a" style="left:44px;top:55px;width:792px;height:300px;background:#050b10;border:1px solid #1f5a7a"></div>
<div class="a" style="left:24px;top:55px;width:17px;height:23px;background:#000;border:1px solid #1f5a7a;border-radius:2px"></div>
<svg style="left:28px;top:61px" width="9" height="10" viewBox="0 0 9 10"><path d="M4.500 0l4.500 10h-9z" fill="#fff"/></svg>
<div class="a" style="left:24px;top:81px;width:17px;height:23px;background:#000;border:1px solid #1f5a7a;border-radius:2px"></div>
<svg style="left:28px;top:88px" width="9" height="10" viewBox="0 0 9 10"><path d="M0 0h9l-4.500 10z" fill="#fff"/></svg>
<div class="a" style="left:137px;top:63px;width:16px;height:9px;background:#2f9a35"></div>
<div class="t" style="left:45px;width:200px;text-align:center;top:63.68px;font-size:8.5px;font-weight:bold;color:#fff">N</div>
<div class="a" style="left:154px;top:60px;width:16px;height:12px;background:#ee8a22"></div>
<div class="t" style="left:62px;width:200px;text-align:center;top:62.88px;font-size:8.5px;font-weight:bold;color:#fff">E</div>
<div class="a" style="left:171px;top:57px;width:16px;height:15px;background:#3f84ea"></div>
<div class="t" style="left:79px;width:200px;text-align:center;top:62.38px;font-size:8.5px;color:#e8f0ff">W</div>
<div class="a" style="left:54.60000000000002px;top:73px;width:65.5px;height:27px;background:#000;border:1px solid #1f5a7a;border-radius:2px"></div>
<div class="t" style="left:61.9px;top:80.19px;font-size:13px;letter-spacing:-0.829px;color:#fff">全局统计</div>
<div class="a" style="left:129.39999999999998px;top:73px;width:65.5px;height:27px;background:#000;border:1px solid #1f5a7a;border-radius:2px"></div>
<div class="t" style="left:136.7px;top:80.19px;font-size:13px;letter-spacing:-0.829px;color:#fff">图表统计</div>
<div class="a" style="left:204.2px;top:73px;width:65.5px;height:27px;background:#000;border:1px solid #1f5a7a;border-radius:2px"></div>
<div class="t" style="left:211.5px;top:80.19px;font-size:13px;letter-spacing:-0.829px;color:#fff">分布点图</div>
<div class="a" style="left:279.0px;top:73px;width:65.5px;height:27px;background:#000;border:1px solid #1f5a7a;border-radius:2px"></div>
<div class="t" style="left:286.3px;top:80.19px;font-size:13px;letter-spacing:-0.829px;color:#fff">报告截图</div>
<div class="a" style="left:353.79999999999995px;top:73px;width:65.5px;height:27px;background:#143752;border:1px solid #1f5a7a;border-radius:2px"></div>
<div class="t" style="left:361.1px;top:80.19px;font-size:13px;letter-spacing:-0.829px;color:#fff">专业数据</div>
<div class="a" style="left:428.6px;top:73px;width:65.5px;height:27px;background:#000;border:1px solid #1f5a7a;border-radius:2px"></div>
<div class="t" style="left:435.9px;top:80.19px;font-size:13px;letter-spacing:-0.829px;color:#fff">行业信息</div>
<div class="a" style="left:378px;top:53px;width:27px;height:17px;background:#000"></div>
<svg style="left:378.5px;top:53.5px" width="25" height="15" viewBox="0 0 25 15"><path d="M2 0h20.500a2 2 0 0 1 2 2v6a2 2 0 0 1 -2 2h-11.500l-4.500 4.500v-4.500h-4.500a2 2 0 0 1 -2-2v-6a2 2 0 0 1 2-2z" fill="#f08c22"/></svg>
<div class="t" style="left:291px;width:200px;text-align:center;top:55.3px;font-size:7px;font-weight:bold;color:#fff;letter-spacing:0.600px">HOT</div>
<div class="t" style="left:506px;top:62.19px;font-size:13px;letter-spacing:-0.543px;color:#fff">帐户货币:CNT</div>
<div class="t" style="left:596px;top:62.19px;font-size:13px;letter-spacing:-0.455px;color:#fff">暴仓比例:50%</div>
<div class="t" style="left:506px;top:84.69px;font-size:13px;letter-spacing:-0.701px;color:#fff">浮亏警报:OFF</div>
<div class="t" style="left:596px;top:84.69px;font-size:13px;letter-spacing:-0.576px;color:#fff">报告推送:OFF</div>
<div class="a" style="left:688px;top:60px;width:63.5px;height:17.5px;background:#143752;border:1px solid #1f5a7a;border-radius:2px"></div>
<div class="t" style="left:695px;top:62.94px;font-size:12.5px;letter-spacing:-0.004px;color:#fff">回撤统计</div>
<div class="a" style="left:761px;top:60px;width:63.5px;height:17.5px;background:#000;border:1px solid #1f5a7a;border-radius:2px"></div>
<div class="t" style="left:768px;top:62.94px;font-size:12.5px;letter-spacing:-0.004px;color:#6f6f6f">仓位统计</div>
<div class="a" style="left:688px;top:82.5px;width:63.5px;height:17.5px;background:#000;border:1px solid #1f5a7a;border-radius:2px"></div>
<div class="t" style="left:695px;top:85.44px;font-size:12.5px;letter-spacing:-0.004px;color:#6f6f6f">利息统计</div>
<div class="a" style="left:761px;top:82.5px;width:63.5px;height:17.5px;background:#000;border:1px solid #1f5a7a;border-radius:2px"></div>
<div class="t" style="left:768px;top:85.44px;font-size:12.5px;letter-spacing:-0.004px;color:#6f6f6f">返佣统计</div>
<div class="a" style="left:45px;top:104px;width:790px;height:29.5px;background:#1f4c66"></div>
<div class="t" style="left:68.5px;top:112.19px;font-size:13px;letter-spacing:-0.375px;color:#fff">日 期</div>
<div class="t" style="left:131.5px;top:112.19px;font-size:13px;letter-spacing:-0.375px;color:#fff">单 量</div>
<div class="t" style="left:197px;top:112.19px;font-size:13px;letter-spacing:-0.208px;color:#fff">手 数</div>
<div class="t" style="left:264.5px;top:112.19px;font-size:13px;letter-spacing:-0.042px;color:#fff">盈 亏</div>
<div class="t" style="left:337px;top:112.19px;font-size:13px;letter-spacing:-0.339px;color:#fff">盈利率</div>
<div class="t" style="left:412.8px;top:112.19px;font-size:13px;letter-spacing:-0.204px;color:#fff">最大浮亏</div>
<div class="t" style="left:499.4px;top:112.19px;font-size:13px;letter-spacing:-0.354px;color:#fff">浮亏比例</div>
<div class="t" style="left:585px;top:112.19px;font-size:13px;letter-spacing:-0.254px;color:#fff">最大浮盈</div>
<div class="t" style="left:671px;top:112.19px;font-size:13px;letter-spacing:-0.254px;color:#fff">浮盈比例</div>
<div class="t" style="left:756px;top:112.19px;font-size:13px;letter-spacing:0.125px;color:#fff">余 额</div>
<div class="t" style="left:66.6px;top:141.41px;font-size:14px;color:#e2321f">03.16</div>
<div class="t" style="left:134.6px;top:141.41px;font-size:14px;color:#e2321f">9</div>
<div class="t" style="left:197.6px;top:141.41px;font-size:14px;color:#e2321f">7.70</div>
<div class="t" style="left:261px;top:141.41px;font-size:14px;color:#e2321f">542.43</div>
<div class="t" style="left:337.7px;top:141.41px;font-size:14px;color:#e2321f">0.04%</div>
<div class="t" style="left:414px;top:141.41px;font-size:14px;color:#4ddc3a">-23167.34</div>
<div class="t" style="left:499px;top:141.41px;font-size:14px;color:#4ddc3a">-1.48%</div>
<div class="t" style="left:585.5px;top:141.41px;font-size:14px;color:#a5a5a5">0.00</div>
<div class="t" style="left:671px;top:141.41px;font-size:14px;color:#a5a5a5">0.00%</div>
<div class="t" style="left:749px;top:141.41px;font-size:14px;color:#e2321f">1566348.06</div>
<div class="t" style="left:66.6px;top:159.48px;font-size:14px;color:#e2321f">03.13</div>
<div class="t" style="left:134.6px;top:159.48px;font-size:14px;color:#e2321f">237</div>
<div class="t" style="left:197.6px;top:159.48px;font-size:14px;color:#e2321f">245.70</div>
<div class="t" style="left:261px;top:159.48px;font-size:14px;color:#e2321f">27032.63</div>
<div class="t" style="left:337.7px;top:159.48px;font-size:14px;color:#e2321f">1.89%</div>
<div class="t" style="left:414px;top:159.48px;font-size:14px;color:#4ddc3a">-74678.77</div>
<div class="t" style="left:499px;top:159.48px;font-size:14px;color:#4ddc3a">-4.85%</div>
<div class="t" style="left:585.5px;top:159.48px;font-size:14px;color:#e2321f">8255.34</div>
<div class="t" style="left:671px;top:159.48px;font-size:14px;color:#e2321f">0.54%</div>
<div class="t" style="left:749px;top:159.48px;font-size:14px;color:#e2321f">1565805.63</div>
<div class="t" style="left:66.6px;top:177.55px;font-size:14px;color:#e2321f">03.12</div>
<div class="t" style="left:134.6px;top:177.55px;font-size:14px;color:#e2321f">153</div>
<div class="t" style="left:197.6px;top:177.55px;font-size:14px;color:#e2321f">147.70</div>
<div class="t" style="left:261px;top:177.55px;font-size:14px;color:#e2321f">11775.37</div>
<div class="t" style="left:337.7px;top:177.55px;font-size:14px;color:#e2321f">0.82%</div>
<div class="t" style="left:414px;top:177.55px;font-size:14px;color:#4ddc3a">-156384.90</div>
<div class="t" style="left:499px;top:177.55px;font-size:14px;color:#4ddc3a">-10.16%</div>
<div class="t" style="left:585.5px;top:177.55px;font-size:14px;color:#e2321f">1455.30</div>
<div class="t" style="left:671px;top:177.55px;font-size:14px;color:#e2321f">0.10%</div>
<div class="t" style="left:749px;top:177.55px;font-size:14px;color:#e2321f">1538773.00</div>
<div class="t" style="left:66.6px;top:195.62px;font-size:14px;color:#e2321f">03.11</div>
<div class="t" style="left:134.6px;top:195.62px;font-size:14px;color:#e2321f">191</div>
<div class="t" style="left:197.6px;top:195.62px;font-size:14px;color:#e2321f">156.36</div>
<div class="t" style="left:261px;top:195.62px;font-size:14px;color:#e2321f">22185.00</div>
<div class="t" style="left:337.7px;top:195.62px;font-size:14px;color:#e2321f">1.55%</div>
<div class="t" style="left:414px;top:195.62px;font-size:14px;color:#4ddc3a">-14079.43</div>
<div class="t" style="left:499px;top:195.62px;font-size:14px;color:#4ddc3a">-0.93%</div>
<div class="t" style="left:585.5px;top:195.62px;font-size:14px;color:#e2321f">1516.20</div>
<div class="t" style="left:671px;top:195.62px;font-size:14px;color:#e2321f">0.10%</div>
<div class="t" style="left:749px;top:195.62px;font-size:14px;color:#e2321f">1526997.63</div>
<div class="t" style="left:66.6px;top:213.69px;font-size:14px;color:#e2321f">03.10</div>
<div class="t" style="left:134.6px;top:213.69px;font-size:14px;color:#e2321f">294</div>
<div class="t" style="left:197.6px;top:213.69px;font-size:14px;color:#e2321f">234.36</div>
<div class="t" style="left:261px;top:213.69px;font-size:14px;color:#e2321f">32957.74</div>
<div class="t" style="left:337.7px;top:213.69px;font-size:14px;color:#e2321f">2.31%</div>
<div class="t" style="left:414px;top:213.69px;font-size:14px;color:#4ddc3a">-41931.22</div>
<div class="t" style="left:499px;top:213.69px;font-size:14px;color:#4ddc3a">-2.81%</div>
<div class="t" style="left:585.5px;top:213.69px;font-size:14px;color:#e2321f">2310.12</div>
<div class="t" style="left:671px;top:213.69px;font-size:14px;color:#e2321f">0.15%</div>
<div class="t" style="left:749px;top:213.69px;font-size:14px;color:#e2321f">1504812.63</div>
<div class="t" style="left:66.6px;top:231.76px;font-size:14px;color:#e2321f">03.09</div>
<div class="t" style="left:134.6px;top:231.76px;font-size:14px;color:#e2321f">457</div>
<div class="t" style="left:197.6px;top:231.76px;font-size:14px;color:#e2321f">192.32</div>
<div class="t" style="left:261px;top:231.76px;font-size:14px;color:#e2321f">29977.42</div>
<div class="t" style="left:337.7px;top:231.76px;font-size:14px;color:#e2321f">2.10%</div>
<div class="t" style="left:414px;top:231.76px;font-size:14px;color:#4ddc3a">-18862.88</div>
<div class="t" style="left:499px;top:231.76px;font-size:14px;color:#4ddc3a">-1.28%</div>
<div class="t" style="left:585.5px;top:231.76px;font-size:14px;color:#e2321f">2274.60</div>
<div class="t" style="left:671px;top:231.76px;font-size:14px;color:#e2321f">0.31%</div>
<div class="t" style="left:749px;top:231.76px;font-size:14px;color:#e2321f">1471854.89</div>
<div class="t" style="left:66.6px;top:249.83px;font-size:14px;color:#e2321f">03.06</div>
<div class="t" style="left:134.6px;top:249.83px;font-size:14px;color:#e2321f">271</div>
<div class="t" style="left:197.6px;top:249.83px;font-size:14px;color:#e2321f">109.41</div>
<div class="t" style="left:261px;top:249.83px;font-size:14px;color:#e2321f">13973.70</div>
<div class="t" style="left:337.7px;top:249.83px;font-size:14px;color:#e2321f">0.98%</div>
<div class="t" style="left:414px;top:249.83px;font-size:14px;color:#4ddc3a">-33533.10</div>
<div class="t" style="left:499px;top:249.83px;font-size:14px;color:#4ddc3a">-4.63%</div>
<div class="t" style="left:585.5px;top:249.83px;font-size:14px;color:#e2321f">5074.80</div>
<div class="t" style="left:671px;top:249.83px;font-size:14px;color:#e2321f">0.70%</div>
<div class="t" style="left:749px;top:249.83px;font-size:14px;color:#e2321f">728219.91</div>
<div class="t" style="left:66.6px;top:267.9px;font-size:14px;color:#a5a5a5">03.05</div>
<div class="t" style="left:134.6px;top:267.9px;font-size:14px;color:#a5a5a5">0</div>
<div class="t" style="left:197.6px;top:267.9px;font-size:14px;color:#a5a5a5">0.00</div>
<div class="t" style="left:261px;top:267.9px;font-size:14px;color:#a5a5a5">0.00</div>
<div class="t" style="left:337.7px;top:267.9px;font-size:14px;color:#a5a5a5">0.00%</div>
<div class="t" style="left:414px;top:267.9px;font-size:14px;color:#a5a5a5">0.00</div>
<div class="t" style="left:499px;top:267.9px;font-size:14px;color:#a5a5a5">0.00%</div>
<div class="t" style="left:585.5px;top:267.9px;font-size:14px;color:#a5a5a5">0.00</div>
<div class="t" style="left:671px;top:267.9px;font-size:14px;color:#a5a5a5">0.00%</div>
<div class="t" style="left:749px;top:267.9px;font-size:14px;color:#a5a5a5">0.00</div>
<div class="t" style="left:66.6px;top:285.97px;font-size:14px;color:#a5a5a5">03.04</div>
<div class="t" style="left:134.6px;top:285.97px;font-size:14px;color:#a5a5a5">0</div>
<div class="t" style="left:197.6px;top:285.97px;font-size:14px;color:#a5a5a5">0.00</div>
<div class="t" style="left:261px;top:285.97px;font-size:14px;color:#a5a5a5">0.00</div>
<div class="t" style="left:337.7px;top:285.97px;font-size:14px;color:#a5a5a5">0.00%</div>
<div class="t" style="left:414px;top:285.97px;font-size:14px;color:#a5a5a5">0.00</div>
<div class="t" style="left:499px;top:285.97px;font-size:14px;color:#a5a5a5">0.00%</div>
<div class="t" style="left:585.5px;top:285.97px;font-size:14px;color:#a5a5a5">0.00</div>
<div class="t" style="left:671px;top:285.97px;font-size:14px;color:#a5a5a5">0.00%</div>
<div class="t" style="left:749px;top:285.97px;font-size:14px;color:#a5a5a5">0.00</div>
<div class="t" style="left:66.6px;top:304.04px;font-size:14px;color:#a5a5a5">03.03</div>
<div class="t" style="left:134.6px;top:304.04px;font-size:14px;color:#a5a5a5">0</div>
<div class="t" style="left:197.6px;top:304.04px;font-size:14px;color:#a5a5a5">0.00</div>
<div class="t" style="left:261px;top:304.04px;font-size:14px;color:#a5a5a5">0.00</div>
<div class="t" style="left:337.7px;top:304.04px;font-size:14px;color:#a5a5a5">0.00%</div>
<div class="t" style="left:414px;top:304.04px;font-size:14px;color:#a5a5a5">0.00</div>
<div class="t" style="left:499px;top:304.04px;font-size:14px;color:#a5a5a5">0.00%</div>
<div class="t" style="left:585.5px;top:304.04px;font-size:14px;color:#a5a5a5">0.00</div>
<div class="t" style="left:671px;top:304.04px;font-size:14px;color:#a5a5a5">0.00%</div>
<div class="t" style="left:749px;top:304.04px;font-size:14px;color:#a5a5a5">0.00</div>
<div class="t" style="left:66.6px;top:322.11px;font-size:14px;color:#a5a5a5">03.02</div>
<div class="t" style="left:134.6px;top:322.11px;font-size:14px;color:#a5a5a5">0</div>
<div class="t" style="left:197.6px;top:322.11px;font-size:14px;color:#a5a5a5">0.00</div>
<div class="t" style="left:261px;top:322.11px;font-size:14px;color:#a5a5a5">0.00</div>
<div class="t" style="left:337.7px;top:322.11px;font-size:14px;color:#a5a5a5">0.00%</div>
<div class="t" style="left:414px;top:322.11px;font-size:14px;color:#a5a5a5">0.00</div>
<div class="t" style="left:499px;top:322.11px;font-size:14px;color:#a5a5a5">0.00%</div>
<div class="t" style="left:585.5px;top:322.11px;font-size:14px;color:#a5a5a5">0.00</div>
<div class="t" style="left:671px;top:322.11px;font-size:14px;color:#a5a5a5">0.00%</div>
<div class="t" style="left:749px;top:322.11px;font-size:14px;color:#a5a5a5">0.00</div>
<div class="a" style="left:17px;top:134px;width:28px;height:24px;background:#14344e;border:1px solid #1f5a7a;border-right:none;border-radius:3px 0 0 3px"></div>
<div class="t" style="left:-68.5px;width:200px;text-align:center;top:139.95px;font-size:13.5px;color:#fff">日</div>
<div class="a" style="left:17px;top:165px;width:28px;height:24px;background:#000;border:1px solid #1f5a7a;border-right:none;border-radius:3px 0 0 3px"></div>
<div class="t" style="left:-68.5px;width:200px;text-align:center;top:170.95px;font-size:13.5px;color:#fff">周</div>
<div class="a" style="left:17px;top:196.5px;width:28px;height:24px;background:#000;border:1px solid #1f5a7a;border-right:none;border-radius:3px 0 0 3px"></div>
<div class="t" style="left:-68.5px;width:200px;text-align:center;top:202.45px;font-size:13.5px;color:#fff">月</div>
<div class="a" style="left:17px;top:228.5px;width:28px;height:24px;background:#000;border:1px solid #1f5a7a;border-right:none;border-radius:3px 0 0 3px"></div>
<div class="t" style="left:-68.5px;width:200px;text-align:center;top:234.45px;font-size:13.5px;color:#fff">年</div>
<div class="a" style="left:7.5px;top:260px;width:37.5px;height:24px;background:#000;border:1px solid #1f5a7a;border-right:none;border-radius:3px 0 0 3px"></div>
<div class="t" style="left:-73.25px;width:200px;text-align:center;top:265.95px;font-size:13.5px;color:#fff">单币</div>
<div class="a" style="left:7.5px;top:291.5px;width:37.5px;height:24px;background:#000;border:1px solid #1f5a7a;border-right:none;border-radius:3px 0 0 3px"></div>
<div class="t" style="left:-73.25px;width:200px;text-align:center;top:297.45px;font-size:13.5px;color:#fff">持仓</div>
<div class="a" style="left:7.5px;top:323.5px;width:37.5px;height:24px;background:#000;border:1px solid #1f5a7a;border-right:none;border-radius:3px 0 0 3px"></div>
<div class="t" style="left:-73.25px;width:200px;text-align:center;top:329.45px;font-size:13.5px;color:#fff">品种</div>
<div class="a" style="left:836px;top:17px;width:106px;height:340px;background:#050b10"></div>
<div class="a" style="left:845px;top:16.5px;width:98px;height:1px;background:repeating-linear-gradient(to right,#1f6a8a 0,#1f6a8a 4px,transparent 4px,transparent 7px)"></div>
<div class="a" style="left:845px;top:49px;width:98px;height:1px;background:repeating-linear-gradient(to right,#1f6a8a 0,#1f6a8a 4px,transparent 4px,transparent 7px)"></div>
<div class="a" style="left:845px;top:55px;width:98px;height:1px;background:repeating-linear-gradient(to right,#1f6a8a 0,#1f6a8a 4px,transparent 4px,transparent 7px)"></div>
<div class="a" style="left:845px;top:87px;width:98px;height:1px;background:repeating-linear-gradient(to right,#1f6a8a 0,#1f6a8a 4px,transparent 4px,transparent 7px)"></div>
<div class="a" style="left:845px;top:120px;width:98px;height:1px;background:repeating-linear-gradient(to right,#1f6a8a 0,#1f6a8a 4px,transparent 4px,transparent 7px)"></div>
<div class="a" style="left:845px;top:166.5px;width:98px;height:1px;background:repeating-linear-gradient(to right,#1f6a8a 0,#1f6a8a 4px,transparent 4px,transparent 7px)"></div>
<div class="a" style="left:845px;top:214px;width:98px;height:1px;background:repeating-linear-gradient(to right,#1f6a8a 0,#1f6a8a 4px,transparent 4px,transparent 7px)"></div>
<div class="a" style="left:845px;top:260.5px;width:98px;height:1px;background:repeating-linear-gradient(to right,#1f6a8a 0,#1f6a8a 4px,transparent 4px,transparent 7px)"></div>
<div class="a" style="left:845px;top:306px;width:98px;height:1px;background:repeating-linear-gradient(to right,#1f6a8a 0,#1f6a8a 4px,transparent 4px,transparent 7px)"></div>
<div class="a" style="left:845px;top:17px;width:1px;height:33px;background:repeating-linear-gradient(to bottom,#1f6a8a 0,#1f6a8a 4px,transparent 4px,transparent 7px)"></div>
<div class="a" style="left:845px;top:55px;width:1px;height:282px;background:repeating-linear-gradient(to bottom,#1f6a8a 0,#1f6a8a 4px,transparent 4px,transparent 7px)"></div>
<div class="t" style="left:862px;top:26.44px;font-size:12.5px;color:#fff">温馨提示：在中</div>
<div class="t" style="left:862px;top:64.74px;font-size:12.5px;color:#fff">平台杠杆：500</div>
<div class="t" style="left:862px;top:97.34px;font-size:12.5px;color:#fff">开户日期：2025</div>
<div class="t" style="left:862px;top:174.94px;font-size:12.5px;color:#fff">盈利率</div>
<div class="t" style="left:862px;top:190.27px;font-size:18px;color:#eee83a">9.70%</div>
<div class="t" style="left:862px;top:221.24px;font-size:12.5px;color:#fff">最大浮亏</div>
<div class="t" style="left:862px;top:236.27px;font-size:18px;color:#eee83a">-156384.90</div>
<div class="t" style="left:862px;top:267.44px;font-size:12.5px;color:#fff">总入金</div>
<div class="t" style="left:862px;top:282.27px;font-size:18px;color:#eee83a">1427903.70</div>
</div>
<div class="a" style="left:1225px;top:155px;width:3px;height:1px;background:#e8e8e8"></div>
<div class="t" style="left:1230px;top:150.71px;font-size:10.5px;letter-spacing:-0.096px;color:#fff;-webkit-text-stroke:0.250px #fff">5395.10</div>
<div class="a" style="left:1225px;top:193px;width:3px;height:1px;background:#e8e8e8"></div>
<div class="t" style="left:1230px;top:188.21px;font-size:10.5px;letter-spacing:-0.096px;color:#fff;-webkit-text-stroke:0.250px #fff">5344.10</div>
<div class="a" style="left:1225px;top:230px;width:3px;height:1px;background:#e8e8e8"></div>
<div class="t" style="left:1230px;top:225.71px;font-size:10.5px;letter-spacing:-0.096px;color:#fff;-webkit-text-stroke:0.250px #fff">5293.10</div>
<div class="a" style="left:1225px;top:268px;width:3px;height:1px;background:#e8e8e8"></div>
<div class="t" style="left:1230px;top:263.21px;font-size:10.5px;letter-spacing:-0.096px;color:#fff;-webkit-text-stroke:0.250px #fff">5243.60</div>
<div class="a" style="left:1225px;top:305px;width:3px;height:1px;background:#e8e8e8"></div>
<div class="t" style="left:1230px;top:300.71px;font-size:10.5px;letter-spacing:-0.096px;color:#fff;-webkit-text-stroke:0.250px #fff">5192.60</div>
<div class="a" style="left:1225px;top:343px;width:3px;height:1px;background:#e8e8e8"></div>
<div class="t" style="left:1230px;top:338.21px;font-size:10.5px;letter-spacing:-0.096px;color:#fff;-webkit-text-stroke:0.250px #fff">5141.60</div>
<div class="a" style="left:1225px;top:380px;width:3px;height:1px;background:#e8e8e8"></div>
<div class="t" style="left:1230px;top:375.71px;font-size:10.5px;letter-spacing:-0.096px;color:#fff;-webkit-text-stroke:0.250px #fff">5090.60</div>
<div class="a" style="left:1225px;top:418px;width:3px;height:1px;background:#e8e8e8"></div>
<div class="t" style="left:1230px;top:413.21px;font-size:10.5px;letter-spacing:-0.096px;color:#fff;-webkit-text-stroke:0.250px #fff">5039.60</div>
<div class="a" style="left:1225px;top:454px;width:3px;height:1px;background:#e8e8e8"></div>
<div class="t" style="left:1230px;top:449.51px;font-size:10.5px;letter-spacing:-0.096px;color:#fff;-webkit-text-stroke:0.250px #fff">4990.10</div>
<div class="a" style="left:1225.5px;top:431px;width:46.5px;height:13px;background:#fff"></div>
<div class="t" style="left:1230px;top:432.51px;font-size:10.5px;letter-spacing:-0.096px;color:#000;-webkit-text-stroke:0.250px #000">5013.18</div>
<div class="a" style="left:283px;top:458px;width:1px;height:3px;background:#e8e8e8"></div>
<div class="t" style="left:282px;top:463.21px;font-size:10.5px;letter-spacing:-0.088px;color:#fff;-webkit-text-stroke:0.200px #fff">23 Feb 2026</div>
<div class="a" style="left:355px;top:458px;width:1px;height:3px;background:#e8e8e8"></div>
<div class="t" style="left:354px;top:463.21px;font-size:10.5px;letter-spacing:0.051px;color:#fff;-webkit-text-stroke:0.200px #fff">25 Feb 02:00</div>
<div class="a" style="left:427px;top:458px;width:1px;height:3px;background:#e8e8e8"></div>
<div class="t" style="left:426.5px;top:463.21px;font-size:10.5px;letter-spacing:0.116px;color:#fff;-webkit-text-stroke:0.200px #fff">26 Feb 11:00</div>
<div class="a" style="left:499px;top:458px;width:1px;height:3px;background:#e8e8e8"></div>
<div class="t" style="left:498.5px;top:463.21px;font-size:10.5px;letter-spacing:0.051px;color:#fff;-webkit-text-stroke:0.200px #fff">27 Feb 20:00</div>
<div class="a" style="left:572px;top:458px;width:1px;height:3px;background:#e8e8e8"></div>
<div class="t" style="left:571px;top:463.21px;font-size:10.5px;letter-spacing:0.178px;color:#fff;-webkit-text-stroke:0.200px #fff">3 Mar 06:00</div>
<div class="a" style="left:644px;top:458px;width:1px;height:3px;background:#e8e8e8"></div>
<div class="t" style="left:643.5px;top:463.21px;font-size:10.5px;letter-spacing:0.178px;color:#fff;-webkit-text-stroke:0.200px #fff">4 Mar 15:00</div>
<div class="a" style="left:716px;top:458px;width:1px;height:3px;background:#e8e8e8"></div>
<div class="t" style="left:715.5px;top:463.21px;font-size:10.5px;letter-spacing:0.178px;color:#fff;-webkit-text-stroke:0.200px #fff">6 Mar 01:00</div>
<div class="a" style="left:790px;top:458px;width:1px;height:3px;background:#e8e8e8"></div>
<div class="t" style="left:789px;top:463.21px;font-size:10.5px;letter-spacing:0.178px;color:#fff;-webkit-text-stroke:0.200px #fff">9 Mar 10:00</div>
<div class="a" style="left:862px;top:458px;width:1px;height:3px;background:#e8e8e8"></div>
<div class="t" style="left:861px;top:463.21px;font-size:10.5px;letter-spacing:0.052px;color:#fff;-webkit-text-stroke:0.200px #fff">10 Mar 19:00</div>
<div class="a" style="left:934px;top:458px;width:1px;height:3px;background:#e8e8e8"></div>
<div class="t" style="left:933.5px;top:463.21px;font-size:10.5px;letter-spacing:0.052px;color:#fff;-webkit-text-stroke:0.200px #fff">12 Mar 05:00</div>
<div class="a" style="left:1007px;top:458px;width:1px;height:3px;background:#e8e8e8"></div>
<div class="t" style="left:1006px;top:463.21px;font-size:10.5px;letter-spacing:0.052px;color:#fff;-webkit-text-stroke:0.200px #fff">13 Mar 14:00</div>
<div class="a" style="left:279px;top:482px;width:1001px;height:26px;background:#f0f0f0"></div>
<div class="a" style="left:277px;top:483.5px;width:1000px;height:1.5px;background:#4a4a4a"></div>
<div class="a" style="left:277px;top:117px;width:1px;height:389px;background:#7a7a7a"></div>
<div class="a" style="left:0px;top:505px;width:278px;height:1px;background:#a8a8a8"></div>
<div class="a" style="left:0px;top:504px;width:277px;height:1px;background:#fcfcfc"></div>
<div class="a" style="left:274px;top:117px;width:1px;height:388px;background:#fcfcfc"></div>
<div class="a" style="left:278px;top:485px;width:119px;height:20px;background:#f0f0f0;border-right:1px solid #9a9a9a"></div>
<div class="a" style="left:397px;top:483px;width:113px;height:22.5px;background:#fff;border:1.500px solid #222;border-top:none"></div>
<div class="t" style="left:296px;top:488.21px;font-size:14px;letter-spacing:-0.366px;color:#7a7a7a">XAUUSD.c,H1</div>
<div class="t" style="left:409.5px;top:488.21px;font-size:14px;letter-spacing:-0.366px;color:#000">XAUUSD.c,H1</div>
<svg style="left:1240px;top:490px" width="5" height="8" viewBox="0 0 5 8"><path d="M5 0v8l-5-4z" fill="#8a8a8a"/></svg>
<svg style="left:1262px;top:490px" width="5" height="8" viewBox="0 0 5 8"><path d="M0 0v8l5-4z" fill="#8a8a8a"/></svg>
<div class="a" style="left:0px;top:508px;width:1277px;height:323px;background:#f0f0f0"></div>
<div class="a" style="left:0px;top:508px;width:1277px;height:1px;background:#fafafa"></div>
<div class="a" style="left:0px;top:527px;width:14px;height:301px;background:#d5e0ee"></div>
<svg style="left:3px;top:513px" width="7" height="7" viewBox="0 0 7 7"><path d="M0.500 0.500l6 6M6.500 0.500l-6 6" stroke="#111" stroke-width="1.700"/></svg>
<div class="t" style="left:-6px;top:806px;font-size:12px;color:#222;transform:rotate(-90deg);transform-origin:center;width:26px;text-align:center">终端</div>
<div class="a" style="left:14px;top:511px;width:1261px;height:289px;background:#fff;border:1px solid #a0a0a0;border-right:none"></div>
<div class="a" style="left:1274px;top:511px;width:3px;height:315px;background:#fafafa"></div>
<div class="a" style="left:15px;top:512px;width:1259px;height:27px;background:#fff"></div>
<div class="a" style="left:15px;top:538px;width:1259px;height:1px;background:#d9d9d9"></div>
<div class="a" style="left:116px;top:512px;width:1px;height:27px;background:#e2e2e2"></div>
<div class="a" style="left:256px;top:512px;width:1px;height:27px;background:#e2e2e2"></div>
<div class="a" style="left:326px;top:512px;width:1px;height:27px;background:#e2e2e2"></div>
<div class="a" style="left:381px;top:512px;width:1px;height:27px;background:#e2e2e2"></div>
<div class="a" style="left:451px;top:512px;width:1px;height:27px;background:#e2e2e2"></div>
<div class="a" style="left:528px;top:512px;width:1px;height:27px;background:#e2e2e2"></div>
<div class="a" style="left:605px;top:512px;width:1px;height:27px;background:#e2e2e2"></div>
<div class="a" style="left:682px;top:512px;width:1px;height:27px;background:#e2e2e2"></div>
<div class="a" style="left:759px;top:512px;width:1px;height:27px;background:#e2e2e2"></div>
<div class="a" style="left:836px;top:512px;width:1px;height:27px;background:#e2e2e2"></div>
<div class="a" style="left:913px;top:512px;width:1px;height:27px;background:#e2e2e2"></div>
<div class="a" style="left:1030px;top:512px;width:1px;height:27px;background:#e2e2e2"></div>
<div class="t" style="left:23px;top:518.06px;font-size:13.7px;letter-spacing:-0.195px;">订单</div>
<svg style="left:62px;top:521px" width="5" height="7" viewBox="0 0 5 7"><path d="M0.500 6.500l3.500-6" stroke="#777" stroke-width="0.900"/></svg>
<div class="t" style="right:1030.2px;top:518.06px;text-align:right;font-size:13.7px;letter-spacing:-0.195px;">时间</div>
<div class="t" style="right:960.45px;top:518.06px;text-align:right;font-size:13.7px;letter-spacing:-0.445px;">类型</div>
<div class="t" style="right:905.45px;top:518.06px;text-align:right;font-size:13.7px;letter-spacing:-0.445px;">手数</div>
<div class="t" style="right:835.32px;top:518.06px;text-align:right;font-size:13.7px;letter-spacing:-0.316px;">交易品种</div>
<div class="t" style="right:758.95px;top:518.06px;text-align:right;font-size:13.7px;letter-spacing:-0.445px;">价格</div>
<div class="t" style="right:680.85px;top:518.06px;text-align:right;font-size:13.7px;letter-spacing:-0.245px;">止损</div>
<div class="t" style="right:604.2px;top:518.06px;text-align:right;font-size:13.7px;letter-spacing:-0.195px;">止盈</div>
<div class="t" style="right:527.2px;top:518.06px;text-align:right;font-size:13.7px;letter-spacing:-0.195px;">价格</div>
<div class="t" style="right:451.36px;top:518.06px;text-align:right;font-size:13.7px;letter-spacing:-0.359px;">手续费</div>
<div class="t" style="right:374.89px;top:518.06px;text-align:right;font-size:13.7px;letter-spacing:-0.493px;">库存费</div>
<div class="t" style="right:257.2px;top:518.06px;text-align:right;font-size:13.7px;letter-spacing:-0.195px;">获利</div>
<div class="t" style="right:13.65px;top:518.06px;text-align:right;font-size:13.7px;letter-spacing:-0.345px;">注释</div>
<div class="a" style="left:15px;top:562px;width:1259px;height:1px;background:#dcdcdc"></div>
<div class="a" style="left:116px;top:539px;width:1px;height:24px;background:#dedede"></div>
<div class="a" style="left:256px;top:539px;width:1px;height:24px;background:#dedede"></div>
<div class="a" style="left:326px;top:539px;width:1px;height:24px;background:#dedede"></div>
<div class="a" style="left:381px;top:539px;width:1px;height:24px;background:#dedede"></div>
<div class="a" style="left:451px;top:539px;width:1px;height:24px;background:#dedede"></div>
<div class="a" style="left:528px;top:539px;width:1px;height:24px;background:#dedede"></div>
<div class="a" style="left:605px;top:539px;width:1px;height:24px;background:#dedede"></div>
<div class="a" style="left:682px;top:539px;width:1px;height:24px;background:#dedede"></div>
<div class="a" style="left:759px;top:539px;width:1px;height:24px;background:#dedede"></div>
<div class="a" style="left:836px;top:539px;width:1px;height:24px;background:#dedede"></div>
<div class="a" style="left:913px;top:539px;width:1px;height:24px;background:#dedede"></div>
<div class="a" style="left:1030px;top:539px;width:1px;height:24px;background:#dedede"></div>
<svg style="left:19.8px;top:542.8px" width="16" height="17" viewBox="0 0 16 17"><path d="M0.600 0.600h8l4.300 4.300v10.300h-12.300z" fill="#fff" stroke="#7c7c7c" stroke-width="1.300" stroke-linejoin="round"/><path d="M8.600 0.600v4.300h4.300" fill="none" stroke="#7c7c7c" stroke-width="1.100"/><circle cx="11.300" cy="12.300" r="3.500" fill="#3f8fe6" stroke="#2462b8" stroke-width="0.800"/></svg>
<div class="t" style="left:41.5px;top:543.66px;font-size:13.7px;letter-spacing:0.137px;">30297293</div>
<div class="t" style="left:124px;top:543.66px;font-size:13.7px;letter-spacing:0.163px;">2026.03.13 20:28:59</div>
<div class="t" style="right:957px;top:543.66px;text-align:right;font-size:13.7px;">buy</div>
<div class="t" style="right:904.16px;top:543.66px;text-align:right;font-size:13.7px;letter-spacing:-0.160px;">0.70</div>
<div class="t" style="left:391.5px;top:543.66px;font-size:13.7px;letter-spacing:0.150px;">xauusd.c</div>
<div class="t" style="right:756.0px;top:543.66px;text-align:right;font-size:13.7px;letter-spacing:0.002px;">5057.83</div>
<div class="t" style="right:679.16px;top:543.66px;text-align:right;font-size:13.7px;letter-spacing:-0.160px;">0.00</div>
<div class="t" style="right:602.16px;top:543.66px;text-align:right;font-size:13.7px;letter-spacing:-0.160px;">0.00</div>
<div class="t" style="right:525.34px;top:543.66px;text-align:right;font-size:13.7px;letter-spacing:-0.041px;">5013.18</div>
<div class="t" style="right:448.16px;top:543.66px;text-align:right;font-size:13.7px;letter-spacing:-0.160px;">0.00</div>
<div class="t" style="right:371px;top:543.66px;text-align:right;font-size:13.7px;">-60.44</div>
<div class="t" style="right:277.7px;top:543.66px;text-align:right;font-size:13.7px;">-3 125.50</div>
<svg style="left:1013px;top:545.5px" width="10" height="10" viewBox="0 0 10 10"><path d="M0.800 0.800l8.400 8.400M9.200 0.800l-8.400 8.400" stroke="#8c8c8c" stroke-width="2"/></svg>
<div class="t" style="left:1109.5px;top:543.66px;font-size:13.7px;letter-spacing:0.021px;">1-363金戈程序化自动交易</div>
<div class="a" style="left:15px;top:563px;width:1259px;height:24px;background:#ececec"></div>
<div class="a" style="left:15px;top:586px;width:1259px;height:1px;background:#dcdcdc"></div>
<div class="a" style="left:116px;top:563px;width:1px;height:24px;background:#dedede"></div>
<div class="a" style="left:256px;top:563px;width:1px;height:24px;background:#dedede"></div>
<div class="a" style="left:326px;top:563px;width:1px;height:24px;background:#dedede"></div>
<div class="a" style="left:381px;top:563px;width:1px;height:24px;background:#dedede"></div>
<div class="a" style="left:451px;top:563px;width:1px;height:24px;background:#dedede"></div>
<div class="a" style="left:528px;top:563px;width:1px;height:24px;background:#dedede"></div>
<div class="a" style="left:605px;top:563px;width:1px;height:24px;background:#dedede"></div>
<div class="a" style="left:682px;top:563px;width:1px;height:24px;background:#dedede"></div>
<div class="a" style="left:759px;top:563px;width:1px;height:24px;background:#dedede"></div>
<div class="a" style="left:836px;top:563px;width:1px;height:24px;background:#dedede"></div>
<div class="a" style="left:913px;top:563px;width:1px;height:24px;background:#dedede"></div>
<div class="a" style="left:1030px;top:563px;width:1px;height:24px;background:#dedede"></div>
<svg style="left:19.8px;top:566.8px" width="16" height="17" viewBox="0 0 16 17"><path d="M0.600 0.600h8l4.300 4.300v10.300h-12.300z" fill="#fff" stroke="#7c7c7c" stroke-width="1.300" stroke-linejoin="round"/><path d="M8.600 0.600v4.300h4.300" fill="none" stroke="#7c7c7c" stroke-width="1.100"/><circle cx="11.300" cy="12.300" r="3.500" fill="#e8532a" stroke="#b03a18" stroke-width="0.800"/></svg>
<div class="t" style="left:41.5px;top:567.51px;font-size:13.7px;letter-spacing:0.137px;">30297809</div>
<div class="t" style="left:124px;top:567.51px;font-size:13.7px;letter-spacing:0.163px;">2026.03.13 20:30:54</div>
<div class="t" style="right:957px;top:567.51px;text-align:right;font-size:13.7px;">sell</div>
<div class="t" style="right:904.16px;top:567.51px;text-align:right;font-size:13.7px;letter-spacing:-0.160px;">0.70</div>
<div class="t" style="left:391.5px;top:567.51px;font-size:13.7px;letter-spacing:0.150px;">xauusd.c</div>
<div class="t" style="right:756.0px;top:567.51px;text-align:right;font-size:13.7px;letter-spacing:0.002px;">5054.56</div>
<div class="t" style="right:679.16px;top:567.51px;text-align:right;font-size:13.7px;letter-spacing:-0.160px;">0.00</div>
<div class="t" style="right:602.16px;top:567.51px;text-align:right;font-size:13.7px;letter-spacing:-0.160px;">0.00</div>
<div class="t" style="right:525.34px;top:567.51px;text-align:right;font-size:13.7px;letter-spacing:-0.041px;">5013.50</div>
<div class="t" style="right:448.16px;top:567.51px;text-align:right;font-size:13.7px;letter-spacing:-0.160px;">0.00</div>
<div class="t" style="right:371px;top:567.51px;text-align:right;font-size:13.7px;">30.77</div>
<div class="t" style="right:277.7px;top:567.51px;text-align:right;font-size:13.7px;">2 874.20</div>
<svg style="left:1013px;top:569.5px" width="10" height="10" viewBox="0 0 10 10"><path d="M0.800 0.800l8.400 8.400M9.200 0.800l-8.400 8.400" stroke="#8c8c8c" stroke-width="2"/></svg>
<div class="t" style="left:1109.5px;top:567.51px;font-size:13.7px;letter-spacing:0.021px;">1-363金戈程序化自动交易</div>
<div class="a" style="left:15px;top:610px;width:1259px;height:1px;background:#dcdcdc"></div>
<div class="a" style="left:116px;top:587px;width:1px;height:24px;background:#dedede"></div>
<div class="a" style="left:256px;top:587px;width:1px;height:24px;background:#dedede"></div>
<div class="a" style="left:326px;top:587px;width:1px;height:24px;background:#dedede"></div>
<div class="a" style="left:381px;top:587px;width:1px;height:24px;background:#dedede"></div>
<div class="a" style="left:451px;top:587px;width:1px;height:24px;background:#dedede"></div>
<div class="a" style="left:528px;top:587px;width:1px;height:24px;background:#dedede"></div>
<div class="a" style="left:605px;top:587px;width:1px;height:24px;background:#dedede"></div>
<div class="a" style="left:682px;top:587px;width:1px;height:24px;background:#dedede"></div>
<div class="a" style="left:759px;top:587px;width:1px;height:24px;background:#dedede"></div>
<div class="a" style="left:836px;top:587px;width:1px;height:24px;background:#dedede"></div>
<div class="a" style="left:913px;top:587px;width:1px;height:24px;background:#dedede"></div>
<div class="a" style="left:1030px;top:587px;width:1px;height:24px;background:#dedede"></div>
<svg style="left:19.8px;top:590.8px" width="16" height="17" viewBox="0 0 16 17"><path d="M0.600 0.600h8l4.300 4.300v10.300h-12.300z" fill="#fff" stroke="#7c7c7c" stroke-width="1.300" stroke-linejoin="round"/><path d="M8.600 0.600v4.300h4.300" fill="none" stroke="#7c7c7c" stroke-width="1.100"/><circle cx="11.300" cy="12.300" r="3.500" fill="#3f8fe6" stroke="#2462b8" stroke-width="0.800"/></svg>
<div class="t" style="left:41.5px;top:591.36px;font-size:13.7px;letter-spacing:0.137px;">30304046</div>
<div class="t" style="left:124px;top:591.36px;font-size:13.7px;letter-spacing:0.163px;">2026.03.13 21:00:51</div>
<div class="t" style="right:957px;top:591.36px;text-align:right;font-size:13.7px;">buy</div>
<div class="t" style="right:904.16px;top:591.36px;text-align:right;font-size:13.7px;letter-spacing:-0.160px;">0.70</div>
<div class="t" style="left:391.5px;top:591.36px;font-size:13.7px;letter-spacing:0.150px;">xauusd.c</div>
<div class="t" style="right:756.0px;top:591.36px;text-align:right;font-size:13.7px;letter-spacing:0.002px;">5049.57</div>
<div class="t" style="right:679.16px;top:591.36px;text-align:right;font-size:13.7px;letter-spacing:-0.160px;">0.00</div>
<div class="t" style="right:602.16px;top:591.36px;text-align:right;font-size:13.7px;letter-spacing:-0.160px;">0.00</div>
<div class="t" style="right:525.34px;top:591.36px;text-align:right;font-size:13.7px;letter-spacing:-0.041px;">5013.18</div>
<div class="t" style="right:448.16px;top:591.36px;text-align:right;font-size:13.7px;letter-spacing:-0.160px;">0.00</div>
<div class="t" style="right:371px;top:591.36px;text-align:right;font-size:13.7px;">-60.44</div>
<div class="t" style="right:277.7px;top:591.36px;text-align:right;font-size:13.7px;">-2 547.30</div>
<svg style="left:1013px;top:593.5px" width="10" height="10" viewBox="0 0 10 10"><path d="M0.800 0.800l8.400 8.400M9.200 0.800l-8.400 8.400" stroke="#8c8c8c" stroke-width="2"/></svg>
<div class="t" style="left:1109.5px;top:591.36px;font-size:13.7px;letter-spacing:0.021px;">1-363金戈程序化自动交易</div>
<div class="a" style="left:15px;top:611px;width:1259px;height:23px;background:#ececec"></div>
<div class="a" style="left:15px;top:633px;width:1259px;height:1px;background:#dcdcdc"></div>
<div class="a" style="left:116px;top:611px;width:1px;height:23px;background:#dedede"></div>
<div class="a" style="left:256px;top:611px;width:1px;height:23px;background:#dedede"></div>
<div class="a" style="left:326px;top:611px;width:1px;height:23px;background:#dedede"></div>
<div class="a" style="left:381px;top:611px;width:1px;height:23px;background:#dedede"></div>
<div class="a" style="left:451px;top:611px;width:1px;height:23px;background:#dedede"></div>
<div class="a" style="left:528px;top:611px;width:1px;height:23px;background:#dedede"></div>
<div class="a" style="left:605px;top:611px;width:1px;height:23px;background:#dedede"></div>
<div class="a" style="left:682px;top:611px;width:1px;height:23px;background:#dedede"></div>
<div class="a" style="left:759px;top:611px;width:1px;height:23px;background:#dedede"></div>
<div class="a" style="left:836px;top:611px;width:1px;height:23px;background:#dedede"></div>
<div class="a" style="left:913px;top:611px;width:1px;height:23px;background:#dedede"></div>
<div class="a" style="left:1030px;top:611px;width:1px;height:23px;background:#dedede"></div>
<svg style="left:19.8px;top:614.8px" width="16" height="17" viewBox="0 0 16 17"><path d="M0.600 0.600h8l4.300 4.300v10.300h-12.300z" fill="#fff" stroke="#7c7c7c" stroke-width="1.300" stroke-linejoin="round"/><path d="M8.600 0.600v4.300h4.300" fill="none" stroke="#7c7c7c" stroke-width="1.100"/><circle cx="11.300" cy="12.300" r="3.500" fill="#3f8fe6" stroke="#2462b8" stroke-width="0.800"/></svg>
<div class="t" style="left:41.5px;top:615.21px;font-size:13.7px;letter-spacing:0.137px;">30313198</div>
<div class="t" style="left:124px;top:615.21px;font-size:13.7px;letter-spacing:0.163px;">2026.03.13 22:14:16</div>
<div class="t" style="right:957px;top:615.21px;text-align:right;font-size:13.7px;">buy</div>
<div class="t" style="right:904.16px;top:615.21px;text-align:right;font-size:13.7px;letter-spacing:-0.160px;">1.40</div>
<div class="t" style="left:391.5px;top:615.21px;font-size:13.7px;letter-spacing:0.150px;">xauusd.c</div>
<div class="t" style="right:756.0px;top:615.21px;text-align:right;font-size:13.7px;letter-spacing:0.002px;">5039.03</div>
<div class="t" style="right:679.16px;top:615.21px;text-align:right;font-size:13.7px;letter-spacing:-0.160px;">0.00</div>
<div class="t" style="right:602.16px;top:615.21px;text-align:right;font-size:13.7px;letter-spacing:-0.160px;">0.00</div>
<div class="t" style="right:525.34px;top:615.21px;text-align:right;font-size:13.7px;letter-spacing:-0.041px;">5013.18</div>
<div class="t" style="right:448.16px;top:615.21px;text-align:right;font-size:13.7px;letter-spacing:-0.160px;">0.00</div>
<div class="t" style="right:371px;top:615.21px;text-align:right;font-size:13.7px;">-120.88</div>
<div class="t" style="right:277.7px;top:615.21px;text-align:right;font-size:13.7px;">-3 619.00</div>
<svg style="left:1013px;top:617.5px" width="10" height="10" viewBox="0 0 10 10"><path d="M0.800 0.800l8.400 8.400M9.200 0.800l-8.400 8.400" stroke="#8c8c8c" stroke-width="2"/></svg>
<div class="t" style="left:1109.5px;top:615.21px;font-size:13.7px;letter-spacing:0.021px;">1-363金戈程序化自动交易</div>
<div class="a" style="left:15px;top:657px;width:1259px;height:1px;background:#dcdcdc"></div>
<div class="a" style="left:116px;top:634px;width:1px;height:24px;background:#dedede"></div>
<div class="a" style="left:256px;top:634px;width:1px;height:24px;background:#dedede"></div>
<div class="a" style="left:326px;top:634px;width:1px;height:24px;background:#dedede"></div>
<div class="a" style="left:381px;top:634px;width:1px;height:24px;background:#dedede"></div>
<div class="a" style="left:451px;top:634px;width:1px;height:24px;background:#dedede"></div>
<div class="a" style="left:528px;top:634px;width:1px;height:24px;background:#dedede"></div>
<div class="a" style="left:605px;top:634px;width:1px;height:24px;background:#dedede"></div>
<div class="a" style="left:682px;top:634px;width:1px;height:24px;background:#dedede"></div>
<div class="a" style="left:759px;top:634px;width:1px;height:24px;background:#dedede"></div>
<div class="a" style="left:836px;top:634px;width:1px;height:24px;background:#dedede"></div>
<div class="a" style="left:913px;top:634px;width:1px;height:24px;background:#dedede"></div>
<div class="a" style="left:1030px;top:634px;width:1px;height:24px;background:#dedede"></div>
<svg style="left:19.8px;top:637.8px" width="16" height="17" viewBox="0 0 16 17"><path d="M0.600 0.600h8l4.300 4.300v10.300h-12.300z" fill="#fff" stroke="#7c7c7c" stroke-width="1.300" stroke-linejoin="round"/><path d="M8.600 0.600v4.300h4.300" fill="none" stroke="#7c7c7c" stroke-width="1.100"/><circle cx="11.300" cy="12.300" r="3.500" fill="#3f8fe6" stroke="#2462b8" stroke-width="0.800"/></svg>
<div class="t" style="left:41.5px;top:639.06px;font-size:13.7px;letter-spacing:0.137px;">30317391</div>
<div class="t" style="left:124px;top:639.06px;font-size:13.7px;letter-spacing:0.163px;">2026.03.13 22:53:46</div>
<div class="t" style="right:957px;top:639.06px;text-align:right;font-size:13.7px;">buy</div>
<div class="t" style="right:904.16px;top:639.06px;text-align:right;font-size:13.7px;letter-spacing:-0.160px;">1.40</div>
<div class="t" style="left:391.5px;top:639.06px;font-size:13.7px;letter-spacing:0.150px;">xauusd.c</div>
<div class="t" style="right:756.0px;top:639.06px;text-align:right;font-size:13.7px;letter-spacing:0.002px;">5015.13</div>
<div class="t" style="right:679.16px;top:639.06px;text-align:right;font-size:13.7px;letter-spacing:-0.160px;">0.00</div>
<div class="t" style="right:602.16px;top:639.06px;text-align:right;font-size:13.7px;letter-spacing:-0.160px;">0.00</div>
<div class="t" style="right:525.34px;top:639.06px;text-align:right;font-size:13.7px;letter-spacing:-0.041px;">5013.18</div>
<div class="t" style="right:448.16px;top:639.06px;text-align:right;font-size:13.7px;letter-spacing:-0.160px;">0.00</div>
<div class="t" style="right:371px;top:639.06px;text-align:right;font-size:13.7px;">-120.88</div>
<div class="t" style="right:277.7px;top:639.06px;text-align:right;font-size:13.7px;">-273.00</div>
<svg style="left:1013px;top:640.5px" width="10" height="10" viewBox="0 0 10 10"><path d="M0.800 0.800l8.400 8.400M9.200 0.800l-8.400 8.400" stroke="#8c8c8c" stroke-width="2"/></svg>
<div class="t" style="left:1109.5px;top:639.06px;font-size:13.7px;letter-spacing:0.021px;">1-363金戈程序化自动交易</div>
<div class="a" style="left:15px;top:658px;width:1259px;height:24px;background:#ececec"></div>
<div class="a" style="left:15px;top:681px;width:1259px;height:1px;background:#dcdcdc"></div>
<div class="a" style="left:116px;top:658px;width:1px;height:24px;background:#dedede"></div>
<div class="a" style="left:256px;top:658px;width:1px;height:24px;background:#dedede"></div>
<div class="a" style="left:326px;top:658px;width:1px;height:24px;background:#dedede"></div>
<div class="a" style="left:381px;top:658px;width:1px;height:24px;background:#dedede"></div>
<div class="a" style="left:451px;top:658px;width:1px;height:24px;background:#dedede"></div>
<div class="a" style="left:528px;top:658px;width:1px;height:24px;background:#dedede"></div>
<div class="a" style="left:605px;top:658px;width:1px;height:24px;background:#dedede"></div>
<div class="a" style="left:682px;top:658px;width:1px;height:24px;background:#dedede"></div>
<div class="a" style="left:759px;top:658px;width:1px;height:24px;background:#dedede"></div>
<div class="a" style="left:836px;top:658px;width:1px;height:24px;background:#dedede"></div>
<div class="a" style="left:913px;top:658px;width:1px;height:24px;background:#dedede"></div>
<div class="a" style="left:1030px;top:658px;width:1px;height:24px;background:#dedede"></div>
<svg style="left:19.8px;top:661.8px" width="16" height="17" viewBox="0 0 16 17"><path d="M0.600 0.600h8l4.300 4.300v10.300h-12.300z" fill="#fff" stroke="#7c7c7c" stroke-width="1.300" stroke-linejoin="round"/><path d="M8.600 0.600v4.300h4.300" fill="none" stroke="#7c7c7c" stroke-width="1.100"/><circle cx="11.300" cy="12.300" r="3.500" fill="#3f8fe6" stroke="#2462b8" stroke-width="0.800"/></svg>
<div class="t" style="left:41.5px;top:662.91px;font-size:13.7px;letter-spacing:0.137px;">30331626</div>
<div class="t" style="left:124px;top:662.91px;font-size:13.7px;letter-spacing:0.163px;">2026.03.16 01:07:51</div>
<div class="t" style="right:957px;top:662.91px;text-align:right;font-size:13.7px;">buy</div>
<div class="t" style="right:904.16px;top:662.91px;text-align:right;font-size:13.7px;letter-spacing:-0.160px;">0.70</div>
<div class="t" style="left:391.5px;top:662.91px;font-size:13.7px;letter-spacing:0.150px;">xauusd.c</div>
<div class="t" style="right:756.0px;top:662.91px;text-align:right;font-size:13.7px;letter-spacing:0.002px;">5028.22</div>
<div class="t" style="right:679.16px;top:662.91px;text-align:right;font-size:13.7px;letter-spacing:-0.160px;">0.00</div>
<div class="t" style="right:602.16px;top:662.91px;text-align:right;font-size:13.7px;letter-spacing:-0.160px;">0.00</div>
<div class="t" style="right:525.34px;top:662.91px;text-align:right;font-size:13.7px;letter-spacing:-0.041px;">5013.18</div>
<div class="t" style="right:448.16px;top:662.91px;text-align:right;font-size:13.7px;letter-spacing:-0.160px;">0.00</div>
<div class="t" style="right:371px;top:662.91px;text-align:right;font-size:13.7px;">0.00</div>
<div class="t" style="right:277.7px;top:662.91px;text-align:right;font-size:13.7px;">-1 052.80</div>
<svg style="left:1013px;top:664.5px" width="10" height="10" viewBox="0 0 10 10"><path d="M0.800 0.800l8.400 8.400M9.200 0.800l-8.400 8.400" stroke="#8c8c8c" stroke-width="2"/></svg>
<div class="t" style="left:1109.5px;top:662.91px;font-size:13.7px;letter-spacing:0.021px;">1-363金戈程序化自动交易</div>
<div class="a" style="left:15px;top:705px;width:1259px;height:1px;background:#dcdcdc"></div>
<div class="a" style="left:116px;top:682px;width:1px;height:24px;background:#dedede"></div>
<div class="a" style="left:256px;top:682px;width:1px;height:24px;background:#dedede"></div>
<div class="a" style="left:326px;top:682px;width:1px;height:24px;background:#dedede"></div>
<div class="a" style="left:381px;top:682px;width:1px;height:24px;background:#dedede"></div>
<div class="a" style="left:451px;top:682px;width:1px;height:24px;background:#dedede"></div>
<div class="a" style="left:528px;top:682px;width:1px;height:24px;background:#dedede"></div>
<div class="a" style="left:605px;top:682px;width:1px;height:24px;background:#dedede"></div>
<div class="a" style="left:682px;top:682px;width:1px;height:24px;background:#dedede"></div>
<div class="a" style="left:759px;top:682px;width:1px;height:24px;background:#dedede"></div>
<div class="a" style="left:836px;top:682px;width:1px;height:24px;background:#dedede"></div>
<div class="a" style="left:913px;top:682px;width:1px;height:24px;background:#dedede"></div>
<div class="a" style="left:1030px;top:682px;width:1px;height:24px;background:#dedede"></div>
<svg style="left:19.8px;top:685.8px" width="16" height="17" viewBox="0 0 16 17"><path d="M0.600 0.600h8l4.300 4.300v10.300h-12.300z" fill="#fff" stroke="#7c7c7c" stroke-width="1.300" stroke-linejoin="round"/><path d="M8.600 0.600v4.300h4.300" fill="none" stroke="#7c7c7c" stroke-width="1.100"/><circle cx="11.300" cy="12.300" r="3.500" fill="#3f8fe6" stroke="#2462b8" stroke-width="0.800"/></svg>
<div class="t" style="left:41.5px;top:686.76px;font-size:13.7px;letter-spacing:0.137px;">30333883</div>
<div class="t" style="left:124px;top:686.76px;font-size:13.7px;letter-spacing:0.163px;">2026.03.16 01:13:53</div>
<div class="t" style="right:957px;top:686.76px;text-align:right;font-size:13.7px;">buy</div>
<div class="t" style="right:904.16px;top:686.76px;text-align:right;font-size:13.7px;letter-spacing:-0.160px;">0.70</div>
<div class="t" style="left:391.5px;top:686.76px;font-size:13.7px;letter-spacing:0.150px;">xauusd.c</div>
<div class="t" style="right:756.0px;top:686.76px;text-align:right;font-size:13.7px;letter-spacing:0.002px;">5022.20</div>
<div class="t" style="right:679.16px;top:686.76px;text-align:right;font-size:13.7px;letter-spacing:-0.160px;">0.00</div>
<div class="t" style="right:602.16px;top:686.76px;text-align:right;font-size:13.7px;letter-spacing:-0.160px;">0.00</div>
<div class="t" style="right:525.34px;top:686.76px;text-align:right;font-size:13.7px;letter-spacing:-0.041px;">5013.18</div>
<div class="t" style="right:448.16px;top:686.76px;text-align:right;font-size:13.7px;letter-spacing:-0.160px;">0.00</div>
<div class="t" style="right:371px;top:686.76px;text-align:right;font-size:13.7px;">0.00</div>
<div class="t" style="right:277.7px;top:686.76px;text-align:right;font-size:13.7px;">-631.40</div>
<svg style="left:1013px;top:688.5px" width="10" height="10" viewBox="0 0 10 10"><path d="M0.800 0.800l8.400 8.400M9.200 0.800l-8.400 8.400" stroke="#8c8c8c" stroke-width="2"/></svg>
<div class="t" style="left:1109.5px;top:686.76px;font-size:13.7px;letter-spacing:0.021px;">1-363金戈程序化自动交易</div>
<div class="a" style="left:15px;top:706px;width:1259px;height:24px;background:#ececec"></div>
<div class="a" style="left:15px;top:729px;width:1259px;height:1px;background:#dcdcdc"></div>
<div class="a" style="left:116px;top:706px;width:1px;height:24px;background:#dedede"></div>
<div class="a" style="left:256px;top:706px;width:1px;height:24px;background:#dedede"></div>
<div class="a" style="left:326px;top:706px;width:1px;height:24px;background:#dedede"></div>
<div class="a" style="left:381px;top:706px;width:1px;height:24px;background:#dedede"></div>
<div class="a" style="left:451px;top:706px;width:1px;height:24px;background:#dedede"></div>
<div class="a" style="left:528px;top:706px;width:1px;height:24px;background:#dedede"></div>
<div class="a" style="left:605px;top:706px;width:1px;height:24px;background:#dedede"></div>
<div class="a" style="left:682px;top:706px;width:1px;height:24px;background:#dedede"></div>
<div class="a" style="left:759px;top:706px;width:1px;height:24px;background:#dedede"></div>
<div class="a" style="left:836px;top:706px;width:1px;height:24px;background:#dedede"></div>
<div class="a" style="left:913px;top:706px;width:1px;height:24px;background:#dedede"></div>
<div class="a" style="left:1030px;top:706px;width:1px;height:24px;background:#dedede"></div>
<svg style="left:19.8px;top:709.8px" width="16" height="17" viewBox="0 0 16 17"><path d="M0.600 0.600h8l4.300 4.300v10.300h-12.300z" fill="#fff" stroke="#7c7c7c" stroke-width="1.300" stroke-linejoin="round"/><path d="M8.600 0.600v4.300h4.300" fill="none" stroke="#7c7c7c" stroke-width="1.100"/><circle cx="11.300" cy="12.300" r="3.500" fill="#3f8fe6" stroke="#2462b8" stroke-width="0.800"/></svg>
<div class="t" style="left:41.5px;top:710.61px;font-size:13.7px;letter-spacing:0.137px;">30336801</div>
<div class="t" style="left:124px;top:710.61px;font-size:13.7px;letter-spacing:0.217px;">2026.03.16 01:19:11</div>
<div class="t" style="right:957px;top:710.61px;text-align:right;font-size:13.7px;">buy</div>
<div class="t" style="right:904.16px;top:710.61px;text-align:right;font-size:13.7px;letter-spacing:-0.160px;">1.40</div>
<div class="t" style="left:391.5px;top:710.61px;font-size:13.7px;letter-spacing:0.150px;">xauusd.c</div>
<div class="t" style="right:756.0px;top:710.61px;text-align:right;font-size:13.7px;letter-spacing:0.002px;">5008.71</div>
<div class="t" style="right:679.16px;top:710.61px;text-align:right;font-size:13.7px;letter-spacing:-0.160px;">0.00</div>
<div class="t" style="right:602.16px;top:710.61px;text-align:right;font-size:13.7px;letter-spacing:-0.160px;">0.00</div>
<div class="t" style="right:525.34px;top:710.61px;text-align:right;font-size:13.7px;letter-spacing:-0.041px;">5013.18</div>
<div class="t" style="right:448.16px;top:710.61px;text-align:right;font-size:13.7px;letter-spacing:-0.160px;">0.00</div>
<div class="t" style="right:371px;top:710.61px;text-align:right;font-size:13.7px;">0.00</div>
<div class="t" style="right:277.7px;top:710.61px;text-align:right;font-size:13.7px;">625.80</div>
<svg style="left:1013px;top:712.5px" width="10" height="10" viewBox="0 0 10 10"><path d="M0.800 0.800l8.400 8.400M9.200 0.800l-8.400 8.400" stroke="#8c8c8c" stroke-width="2"/></svg>
<div class="t" style="left:1109.5px;top:710.61px;font-size:13.7px;letter-spacing:0.021px;">1-363金戈程序化自动交易</div>
<div class="a" style="left:15px;top:753px;width:1259px;height:1px;background:#dcdcdc"></div>
<div class="a" style="left:116px;top:730px;width:1px;height:24px;background:#dedede"></div>
<div class="a" style="left:256px;top:730px;width:1px;height:24px;background:#dedede"></div>
<div class="a" style="left:326px;top:730px;width:1px;height:24px;background:#dedede"></div>
<div class="a" style="left:381px;top:730px;width:1px;height:24px;background:#dedede"></div>
<div class="a" style="left:451px;top:730px;width:1px;height:24px;background:#dedede"></div>
<div class="a" style="left:528px;top:730px;width:1px;height:24px;background:#dedede"></div>
<div class="a" style="left:605px;top:730px;width:1px;height:24px;background:#dedede"></div>
<div class="a" style="left:682px;top:730px;width:1px;height:24px;background:#dedede"></div>
<div class="a" style="left:759px;top:730px;width:1px;height:24px;background:#dedede"></div>
<div class="a" style="left:836px;top:730px;width:1px;height:24px;background:#dedede"></div>
<div class="a" style="left:913px;top:730px;width:1px;height:24px;background:#dedede"></div>
<div class="a" style="left:1030px;top:730px;width:1px;height:24px;background:#dedede"></div>
<svg style="left:19.8px;top:733.8px" width="16" height="17" viewBox="0 0 16 17"><path d="M0.600 0.600h8l4.300 4.300v10.300h-12.300z" fill="#fff" stroke="#7c7c7c" stroke-width="1.300" stroke-linejoin="round"/><path d="M8.600 0.600v4.300h4.300" fill="none" stroke="#7c7c7c" stroke-width="1.100"/><circle cx="11.300" cy="12.300" r="3.500" fill="#e8532a" stroke="#b03a18" stroke-width="0.800"/></svg>
<div class="t" style="left:41.5px;top:734.46px;font-size:13.7px;letter-spacing:0.137px;">30337407</div>
<div class="t" style="left:124px;top:734.46px;font-size:13.7px;letter-spacing:0.163px;">2026.03.16 01:20:27</div>
<div class="t" style="right:957px;top:734.46px;text-align:right;font-size:13.7px;">sell</div>
<div class="t" style="right:904.16px;top:734.46px;text-align:right;font-size:13.7px;letter-spacing:-0.160px;">0.70</div>
<div class="t" style="left:391.5px;top:734.46px;font-size:13.7px;letter-spacing:0.150px;">xauusd.c</div>
<div class="t" style="right:756.0px;top:734.46px;text-align:right;font-size:13.7px;letter-spacing:0.002px;">5006.54</div>
<div class="t" style="right:679.16px;top:734.46px;text-align:right;font-size:13.7px;letter-spacing:-0.160px;">0.00</div>
<div class="t" style="right:602.16px;top:734.46px;text-align:right;font-size:13.7px;letter-spacing:-0.160px;">0.00</div>
<div class="t" style="right:525.34px;top:734.46px;text-align:right;font-size:13.7px;letter-spacing:-0.041px;">5013.50</div>
<div class="t" style="right:448.16px;top:734.46px;text-align:right;font-size:13.7px;letter-spacing:-0.160px;">0.00</div>
<div class="t" style="right:371px;top:734.46px;text-align:right;font-size:13.7px;">0.00</div>
<div class="t" style="right:277.7px;top:734.46px;text-align:right;font-size:13.7px;">-487.20</div>
<svg style="left:1013px;top:736.5px" width="10" height="10" viewBox="0 0 10 10"><path d="M0.800 0.800l8.400 8.400M9.200 0.800l-8.400 8.400" stroke="#8c8c8c" stroke-width="2"/></svg>
<div class="t" style="left:1109.5px;top:734.46px;font-size:13.7px;letter-spacing:0.021px;">1-363金戈程序化自动交易</div>
<div class="a" style="left:15px;top:754px;width:1259px;height:24px;background:#ececec"></div>
<div class="a" style="left:15px;top:777px;width:1259px;height:1px;background:#dcdcdc"></div>
<div class="a" style="left:116px;top:754px;width:1px;height:24px;background:#dedede"></div>
<div class="a" style="left:256px;top:754px;width:1px;height:24px;background:#dedede"></div>
<div class="a" style="left:326px;top:754px;width:1px;height:24px;background:#dedede"></div>
<div class="a" style="left:381px;top:754px;width:1px;height:24px;background:#dedede"></div>
<div class="a" style="left:451px;top:754px;width:1px;height:24px;background:#dedede"></div>
<div class="a" style="left:528px;top:754px;width:1px;height:24px;background:#dedede"></div>
<div class="a" style="left:605px;top:754px;width:1px;height:24px;background:#dedede"></div>
<div class="a" style="left:682px;top:754px;width:1px;height:24px;background:#dedede"></div>
<div class="a" style="left:759px;top:754px;width:1px;height:24px;background:#dedede"></div>
<div class="a" style="left:836px;top:754px;width:1px;height:24px;background:#dedede"></div>
<div class="a" style="left:913px;top:754px;width:1px;height:24px;background:#dedede"></div>
<div class="a" style="left:1030px;top:754px;width:1px;height:24px;background:#dedede"></div>
<svg style="left:19.8px;top:757.8px" width="16" height="17" viewBox="0 0 16 17"><path d="M0.600 0.600h8l4.300 4.300v10.300h-12.300z" fill="#fff" stroke="#7c7c7c" stroke-width="1.300" stroke-linejoin="round"/><path d="M8.600 0.600v4.300h4.300" fill="none" stroke="#7c7c7c" stroke-width="1.100"/><circle cx="11.300" cy="12.300" r="3.500" fill="#e8532a" stroke="#b03a18" stroke-width="0.800"/></svg>
<div class="t" style="left:41.5px;top:758.31px;font-size:13.7px;letter-spacing:0.137px;">30339846</div>
<div class="t" style="left:124px;top:758.31px;font-size:13.7px;letter-spacing:0.163px;">2026.03.16 01:24:03</div>
<div class="t" style="right:957px;top:758.31px;text-align:right;font-size:13.7px;">sell</div>
<div class="t" style="right:904.16px;top:758.31px;text-align:right;font-size:13.7px;letter-spacing:-0.160px;">0.70</div>
<div class="t" style="left:391.5px;top:758.31px;font-size:13.7px;letter-spacing:0.150px;">xauusd.c</div>
<div class="t" style="right:756.0px;top:758.31px;text-align:right;font-size:13.7px;letter-spacing:0.002px;">5013.13</div>
<div class="t" style="right:679.16px;top:758.31px;text-align:right;font-size:13.7px;letter-spacing:-0.160px;">0.00</div>
<div class="t" style="right:602.16px;top:758.31px;text-align:right;font-size:13.7px;letter-spacing:-0.160px;">0.00</div>
<div class="t" style="right:525.34px;top:758.31px;text-align:right;font-size:13.7px;letter-spacing:-0.041px;">5013.50</div>
<div class="t" style="right:448.16px;top:758.31px;text-align:right;font-size:13.7px;letter-spacing:-0.160px;">0.00</div>
<div class="t" style="right:371px;top:758.31px;text-align:right;font-size:13.7px;">0.00</div>
<div class="t" style="right:277.7px;top:758.31px;text-align:right;font-size:13.7px;">-25.90</div>
<svg style="left:1013px;top:760.5px" width="10" height="10" viewBox="0 0 10 10"><path d="M0.800 0.800l8.400 8.400M9.200 0.800l-8.400 8.400" stroke="#8c8c8c" stroke-width="2"/></svg>
<div class="t" style="left:1109.5px;top:758.31px;font-size:13.7px;letter-spacing:0.021px;">1-363金戈程序化自动交易</div>
<div class="a" style="left:15px;top:777.5px;width:1259px;height:22px;background:#c8c8c8"></div>
<div class="a" style="left:16px;top:799.5px;width:1258px;height:1.5px;background:#3a3a3a"></div>
<svg style="left:20px;top:782px" width="13" height="15" viewBox="0 0 13 15"><rect x="0.500" y="0.500" width="12" height="14" rx="1.500" fill="#fff" stroke="#777" stroke-width="1"/><path d="M5 3h3v4h2.500l-4 5-4-5h2.500z" fill="#e8532a" stroke="#b03a18" stroke-width="0.600"/></svg>
<div class="t" style="left:41.3px;top:782.36px;font-size:13.7px;font-weight:bold;letter-spacing:0.230px;">余额: 1 566 348.06 CNT</div>
<div class="t" style="left:203px;top:782.36px;font-size:13.7px;font-weight:bold;letter-spacing:0.209px;">净值: 1 557 754.09</div>
<div class="t" style="left:331.8px;top:782.36px;font-size:13.7px;font-weight:bold;letter-spacing:0.040px;">已用预付款: 5 475.98</div>
<div class="t" style="left:471.5px;top:782.36px;font-size:13.7px;font-weight:bold;letter-spacing:0.107px;">可用预付款: 1 552 278.11</div>
<div class="t" style="left:640px;top:782.36px;font-size:13.7px;font-weight:bold;letter-spacing:0.059px;">预付款比例: 28447.05%</div>
<div class="t" style="left:942.5px;top:782.36px;font-size:13.7px;font-weight:bold;letter-spacing:0.128px;">-8 593.97</div>
<div class="a" style="left:18px;top:799.5px;width:50.5px;height:26.5px;background:#fff;border:1.500px solid #222;border-top:none;border-radius:0 0 2.500px 2.500px"></div>
<div class="t" style="left:29.5px;top:805.71px;font-size:14px;letter-spacing:-0.500px;">交易</div>
<div class="t" style="left:79.6px;top:805.71px;font-size:14px;letter-spacing:-0.300px;color:#8a8a8a">展示</div>
<div class="t" style="left:129.4px;top:805.71px;font-size:14px;letter-spacing:-0.475px;color:#8a8a8a">账户历史</div>
<div class="t" style="left:206px;top:805.71px;font-size:14px;letter-spacing:-0.500px;color:#8a8a8a">新闻</div>
<div class="t" style="left:256px;top:805.71px;font-size:14px;letter-spacing:-0.700px;color:#8a8a8a">警报</div>
<div class="t" style="left:306px;top:805.71px;font-size:14px;letter-spacing:-0.750px;color:#8a8a8a">邮箱</div>
<div class="t" style="left:364px;top:805.71px;font-size:14px;letter-spacing:-0.250px;color:#8a8a8a">市场</div>
<div class="t" style="left:437.5px;top:805.71px;font-size:14px;letter-spacing:-0.750px;color:#8a8a8a">信号</div>
<div class="t" style="left:487.5px;top:805.71px;font-size:14px;letter-spacing:-0.750px;color:#8a8a8a">文章</div>
<div class="t" style="left:536.5px;top:805.71px;font-size:14px;letter-spacing:-0.333px;color:#8a8a8a">代码库</div>
<div class="t" style="left:601px;top:805.71px;font-size:14px;letter-spacing:-1.594px;color:#8a8a8a">EA</div>
<div class="t" style="left:641px;top:805.71px;font-size:14px;letter-spacing:-0.750px;color:#8a8a8a">日志</div>
<div class="a" style="left:118px;top:803.5px;width:1.5px;height:18.5px;background:#808080"></div>
<div class="a" style="left:195px;top:803.5px;width:1.5px;height:18.5px;background:#808080"></div>
<div class="a" style="left:245px;top:803.5px;width:1.5px;height:18.5px;background:#808080"></div>
<div class="a" style="left:294px;top:803.5px;width:1.5px;height:18.5px;background:#808080"></div>
<div class="a" style="left:353px;top:803.5px;width:1.5px;height:18.5px;background:#808080"></div>
<div class="a" style="left:426px;top:803.5px;width:1.5px;height:18.5px;background:#808080"></div>
<div class="a" style="left:475px;top:803.5px;width:1.5px;height:18.5px;background:#808080"></div>
<div class="a" style="left:525px;top:803.5px;width:1.5px;height:18.5px;background:#808080"></div>
<div class="a" style="left:590px;top:803.5px;width:1.5px;height:18.5px;background:#808080"></div>
<div class="a" style="left:629px;top:803.5px;width:1.5px;height:18.5px;background:#808080"></div>
<div class="a" style="left:679px;top:803.5px;width:1.5px;height:18.5px;background:#808080"></div>
<div class="t" style="left:335px;top:812.16px;font-size:11px;font-weight:bold;color:#e03a2a">6</div>
<div class="t" style="left:394px;top:812.16px;font-size:11px;font-weight:bold;letter-spacing:0.547px;color:#e03a2a">142</div>
<svg style="left:1141px;top:796px" width="29" height="32" viewBox="0 0 29 32"><path d="M8 0h13a8 8 0 0 1 8 8v12a8 8 0 0 1 -8 8h-2.500c-1.500 2-3.500 3.500-6.500 4 1-1.200 1.500-2.500 1.500-4h-5.500a8 8 0 0 1 -8-8v-12a8 8 0 0 1 8-8z" fill="#fff"/><path d="M22 9.500c-.5-3.800-5.300-4.200-6.300-.3l-4.700 16.300M7 14.300h14" stroke="#3a3a3a" stroke-width="2.300" fill="none" stroke-linecap="round"/></svg>
<div class="t" style="left:1178.5px;top:796.42px;font-size:28px;letter-spacing:0.854px;color:#fff;text-shadow:1.300px 1.300px 0 #3a3a3a">@金戈</div>
<div class="a" style="left:0px;top:829.5px;width:1277px;height:1.5px;background:#fbfbfb"></div>
<div class="a" style="left:0px;top:831px;width:1277px;height:1px;background:#b4b4b4"></div>
<div class="a" style="left:0px;top:832px;width:1277px;height:24px;background:#f0f0f0"></div>
<div class="t" style="left:0px;top:840.66px;font-size:13.7px;letter-spacing:-0.209px;">寻求帮助,请按F1键</div>
<div class="t" style="left:362px;top:840.36px;font-size:13.7px;letter-spacing:0.375px;">Default</div>
<div class="a" style="left:356px;top:836px;width:1px;height:20px;background:#c6c6c6"></div>
<div class="a" style="left:357px;top:836px;width:1px;height:20px;background:#fff"></div>
<div class="a" style="left:507px;top:836px;width:1px;height:20px;background:#c6c6c6"></div>
<div class="a" style="left:508px;top:836px;width:1px;height:20px;background:#fff"></div>
<div class="a" style="left:640px;top:836px;width:1px;height:20px;background:#c6c6c6"></div>
<div class="a" style="left:641px;top:836px;width:1px;height:20px;background:#fff"></div>
<div class="a" style="left:733px;top:836px;width:1px;height:20px;background:#c6c6c6"></div>
<div class="a" style="left:734px;top:836px;width:1px;height:20px;background:#fff"></div>
<div class="a" style="left:825px;top:836px;width:1px;height:20px;background:#c6c6c6"></div>
<div class="a" style="left:826px;top:836px;width:1px;height:20px;background:#fff"></div>
<div class="a" style="left:914px;top:836px;width:1px;height:20px;background:#c6c6c6"></div>
<div class="a" style="left:915px;top:836px;width:1px;height:20px;background:#fff"></div>
<div class="a" style="left:1004px;top:836px;width:1px;height:20px;background:#c6c6c6"></div>
<div class="a" style="left:1005px;top:836px;width:1px;height:20px;background:#fff"></div>
<div class="a" style="left:1092px;top:836px;width:1px;height:20px;background:#c6c6c6"></div>
<div class="a" style="left:1093px;top:836px;width:1px;height:20px;background:#fff"></div>
<div class="a" style="left:1098px;top:839px;width:2px;height:13.5px;background:linear-gradient(to bottom,#6f8f2a 0,#6f8f2a 9.5px,#1f4f7a 9.5px,#1f4f7a 100%)"></div>
<div class="a" style="left:1101px;top:839px;width:2px;height:13.5px;background:linear-gradient(to bottom,#6f8f2a 0,#6f8f2a 8.4px,#1f4f7a 8.4px,#1f4f7a 100%)"></div>
<div class="a" style="left:1104px;top:839px;width:2px;height:13.5px;background:linear-gradient(to bottom,#6f8f2a 0,#6f8f2a 7.3px,#1f4f7a 7.3px,#1f4f7a 100%)"></div>
<div class="a" style="left:1107px;top:839px;width:2px;height:13.5px;background:linear-gradient(to bottom,#6f8f2a 0,#6f8f2a 6.2px,#1f4f7a 6.2px,#1f4f7a 100%)"></div>
<div class="a" style="left:1110px;top:839px;width:2px;height:13.5px;background:linear-gradient(to bottom,#6f8f2a 0,#6f8f2a 5.1px,#1f4f7a 5.1px,#1f4f7a 100%)"></div>
<div class="a" style="left:1113px;top:839px;width:2px;height:13.5px;background:linear-gradient(to bottom,#6f8f2a 0,#6f8f2a 4.0px,#1f4f7a 4.0px,#1f4f7a 100%)"></div>
<div class="a" style="left:1116px;top:839px;width:2px;height:13.5px;background:linear-gradient(to bottom,#6f8f2a 0,#6f8f2a 2.9px,#1f4f7a 2.9px,#1f4f7a 100%)"></div>
<div class="a" style="left:1119px;top:839px;width:2px;height:13.5px;background:linear-gradient(to bottom,#6f8f2a 0,#6f8f2a 1.8px,#1f4f7a 1.8px,#1f4f7a 100%)"></div>
<div class="a" style="left:1122px;top:839px;width:2px;height:13.5px;background:linear-gradient(to bottom,#6f8f2a 0,#6f8f2a 0.7px,#1f4f7a 0.7px,#1f4f7a 100%)"></div>
<div class="t" style="left:1129.6px;top:840.36px;font-size:13.7px;letter-spacing:0.536px;">42998/699 kb</div>
<svg style="left:1263px;top:842px" width="14" height="14" viewBox="0 0 14 14"><path d="M14 0l-14 14M14 4l-10 10M14 8l-6 6M14 12l-2 2" stroke="#8f8f8f" stroke-width="1.200"/></svg>
</body></html>
